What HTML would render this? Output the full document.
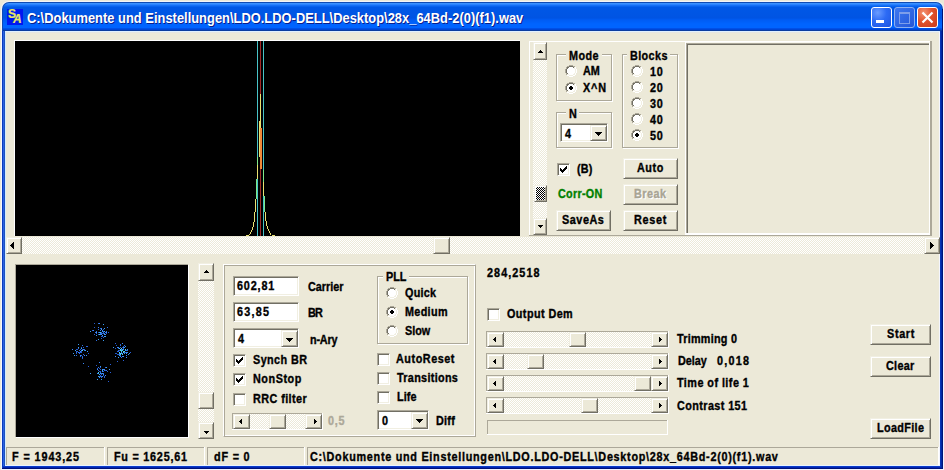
<!DOCTYPE html>
<html><head><meta charset="utf-8"><style>
html,body{margin:0;padding:0;width:944px;height:470px;overflow:hidden;background:#ECE9D8;}
body>div,body>span,body>svg{position:absolute;box-sizing:content-box;}
.t{position:absolute;font-family:"Liberation Sans",sans-serif;font-weight:bold;white-space:pre;-webkit-text-stroke:0.35px currentColor;}
.btn{border:1px solid;border-color:#F1EFE2 #716F64 #716F64 #F1EFE2;box-shadow:inset 1px 1px 0 #fff, inset -1px -1px 0 #ACA899;background:#ECE9D8;}
.sunk{border:1px solid;border-color:#ACA899 #fff #fff #ACA899;box-shadow:inset 1px 1px 0 #716F64, inset -1px -1px 0 #F1EFE2;}
.rad{width:12px;height:12px;border-radius:50%;background:#fff;box-sizing:border-box;border:1px solid;border-color:#ACA899 #fff #fff #ACA899;box-shadow:inset 1px 1px 0 #716F64;}
.cap{width:19px;height:19px;border:1px solid #fff;border-radius:3px;box-sizing:content-box;}
</style></head><body>
<div style="left:1px;top:1px;width:943px;height:30px;background:#F2F4FA;border-radius:8px 8px 0 0"></div>
<div style="left:2px;top:2px;width:941px;height:29px;background:#0F4CB4;border-radius:7px 7px 0 0"></div>
<div style="left:3px;top:3px;width:939px;height:28px;border-radius:6px 6px 0 0;background:linear-gradient(180deg,#3A92FF 0px,#3A92FF 1px,#2A82FF 1px,#2A82FF 2px,#1470F6 2px,#1470F6 3px,#0862EE 3px,#0862EE 4px,#0058E6 4px,#0054E3 15px,#005CF4 17px,#0064FF 21px,#0064FF 25px,#0050E8 25px,#0050E8 26px,#0046D6 26px,#0046D6 27px,#0A3CA0 27px,#0A3CA0 28px)"></div>
<div style="left:2px;top:31px;width:1px;height:438px;background:#0A3CC0"></div>
<div style="left:3px;top:31px;width:1px;height:435px;background:#2A62E0"></div>
<div style="left:4px;top:31px;width:1px;height:435px;background:#1E50C0"></div>
<div style="left:5px;top:31px;width:1px;height:434px;background:#D0ECFF"></div>
<div style="left:939px;top:31px;width:1px;height:434px;background:#F4F6FF"></div>
<div style="left:940px;top:31px;width:1px;height:438px;background:#0834B4"></div>
<div style="left:941px;top:31px;width:1px;height:438px;background:#0028A4"></div>
<div style="left:942px;top:9px;width:1px;height:460px;background:#001478"></div>
<div style="left:5px;top:465px;width:935px;height:1px;background:#E8F2FF"></div>
<div style="left:3px;top:466px;width:937px;height:1px;background:#0B3BCB"></div>
<div style="left:3px;top:467px;width:938px;height:1px;background:#0025B0"></div>
<div style="left:2px;top:468px;width:941px;height:1px;background:#00107A"></div>
<div style="left:1px;top:10px;width:1px;height:460px;background:#F4F6FF"></div>
<div style="left:943px;top:10px;width:1px;height:460px;background:#F0F2FF"></div>
<div style="left:1px;top:469px;width:943px;height:1px;background:#F0F2FF"></div>
<div style="left:6px;top:31px;width:933px;height:434px;background:#ECE9D8"></div>
<div style="left:5px;top:31px;width:935px;height:1px;background:#E0F0FF"></div>
<div style="left:6px;top:32px;width:933px;height:1px;background:#E6E6E0"></div>
<div style="left:7px;top:9px;width:16px;height:16px;background:#0018F0"></div>
<span class="t" style="left:8px;top:8px;font-size:12px;line-height:12px;color:#E8E860;-webkit-text-stroke:0.2px #E8E860">S</span>
<span class="t" style="left:13px;top:13px;font-size:12px;line-height:12px;color:#E8E860;font-style:italic;-webkit-text-stroke:0.2px #E8E860">A</span>
<span class="t" style="left:27.00px;top:11px;font-size:14px;line-height:14px;letter-spacing:0.016px;color:#fff;transform:scaleX(0.92);transform-origin:0 0;text-shadow:1px 1px 0 #0A1E8C;-webkit-text-stroke:0px #fff">C:\Dokumente und Einstellungen\LDO.LDO-DELL\Desktop\28x_64Bd-2(0)(f1).wav</span>
<div class="cap" style="left:871px;top:7px;background:radial-gradient(circle at 30% 25%,#6A9CFF 0,#2D6BF5 45%,#1F55E0 100%)"></div>
<div style="left:876px;top:20px;width:8px;height:3px;background:#fff"></div>
<div class="cap" style="left:894px;top:7px;border-color:#8EB0F0;background:linear-gradient(135deg,#3E78F0,#2456D8)"></div>
<div style="left:899px;top:12px;width:9px;height:9px;border:1px solid #7E9EEA;border-top-width:2px;"></div>
<div class="cap" style="left:917px;top:7px;background:radial-gradient(circle at 30% 25%,#F39373 0,#E2522C 45%,#C8391A 100%)"></div>
<svg style="left:921px;top:11px" width="13" height="13"><path d="M1.5 1.5 L11.5 11.5 M11.5 1.5 L1.5 11.5" stroke="#fff" stroke-width="2.2"/></svg>
<div style="left:14px;top:40px;width:506px;height:1px;background:#FFFFFF"></div>
<div style="left:14px;top:40px;width:1px;height:196px;background:#FFFFFF"></div>
<div style="left:15px;top:41px;width:505px;height:195px;background:#000"></div>
<svg style="left:15px;top:41px" width="505" height="195" shape-rendering="crispEdges"><rect x="242" y="0" width="1" height="195" fill="#48C4C8"/><rect x="248" y="0" width="1" height="195" fill="#48C4C8"/><rect x="245" y="0" width="1" height="53" fill="#A02828"/><rect x="245" y="53" width="1" height="34" fill="#E8E070"/><rect x="244" y="80" width="1" height="7" fill="#E8E070"/><rect x="244" y="87" width="1" height="29" fill="#E8E070"/><rect x="245" y="87" width="1" height="41" fill="#F08838"/><rect x="246" y="87" width="1" height="41" fill="#F08838"/><rect x="245" y="128" width="1" height="67" fill="#A02828"/><rect x="242" y="116" width="1" height="8" fill="#80E888"/><rect x="242" y="124" width="1" height="14" fill="#E8E070"/><rect x="241" y="138" width="1" height="20" fill="#80E888"/><rect x="240" y="158" width="1" height="13" fill="#E8E070"/><rect x="239" y="171" width="1" height="10" fill="#E8E070"/><rect x="238" y="181" width="1" height="5" fill="#E8E070"/><rect x="237" y="186" width="1" height="3" fill="#E8E070"/><rect x="236" y="189" width="1" height="2" fill="#E8E070"/><rect x="235" y="191" width="1" height="2" fill="#E8E070"/><rect x="234" y="193" width="1" height="1" fill="#E8E070"/><rect x="231" y="194" width="3" height="1" fill="#E8E070"/><rect x="248" y="129" width="1" height="12" fill="#80E888"/><rect x="248" y="141" width="1" height="14" fill="#E8E070"/><rect x="249" y="155" width="1" height="16" fill="#80E888"/><rect x="250" y="171" width="1" height="9" fill="#E8E070"/><rect x="251" y="180" width="1" height="5" fill="#E8E070"/><rect x="252" y="185" width="1" height="3" fill="#E8E070"/><rect x="253" y="188" width="1" height="2" fill="#E8E070"/><rect x="254" y="190" width="1" height="2" fill="#E8E070"/><rect x="255" y="192" width="1" height="2" fill="#E8E070"/><rect x="257" y="194" width="3" height="1" fill="#E8E070"/></svg>
<div style="left:529px;top:41px;width:157px;height:1px;background:#FFFFFF"></div>
<div style="left:529px;top:41px;width:1px;height:195px;background:#FFFFFF"></div>
<div style="left:529px;top:235px;width:157px;height:1px;background:#ACA899"></div>
<div style="left:533px;top:42px;width:14px;height:193px;background:repeating-conic-gradient(#fff 0 25%, #ECE9D8 0 50%) 0 0/2px 2px"></div>
<div class="btn" style="left:533px;top:42px;width:12px;height:16px;"></div>
<svg style="left:538px;top:50px" width="5" height="3" shape-rendering="crispEdges" fill="#000"><rect x="2" y="0" width="1" height="1"/><rect x="1" y="1" width="3" height="1"/><rect x="0" y="2" width="5" height="1"/></svg>
<div class="btn" style="left:533px;top:218px;width:12px;height:15px;"></div>
<svg style="left:538px;top:225px" width="5" height="3" shape-rendering="crispEdges" fill="#000"><rect x="0" y="0" width="5" height="1"/><rect x="1" y="1" width="3" height="1"/><rect x="2" y="2" width="1" height="1"/></svg>
<div class="btn" style="left:534px;top:185px;width:11px;height:15px;"></div>
<div style="left:536px;top:187px;width:9px;height:13px;background:repeating-conic-gradient(#000 0 25%, #fff 0 50%) 0 0/2px 2px"></div>
<div style="left:556px;top:54px;width:54px;height:45px;border:1px solid #ACA899;box-shadow:1px 1px 0 #FFFFFF, inset 1px 1px 0 #FFFFFF"></div>
<div style="left:566px;top:49px;width:36px;height:12px;background:#ECE9D8"></div>
<span class="t" style="left:569.00px;top:50px;font-size:12px;line-height:12px;letter-spacing:0.444px;color:#000;transform:scaleX(0.9);transform-origin:0 0;">Mode</span>
<svg style="left:565px;top:65px" width="12" height="12" shape-rendering="crispEdges"><rect x="4" y="0" width="1" height="1" fill="#ACA899"/><rect x="5" y="0" width="1" height="1" fill="#ACA899"/><rect x="6" y="0" width="1" height="1" fill="#ACA899"/><rect x="7" y="0" width="1" height="1" fill="#ACA899"/><rect x="2" y="1" width="1" height="1" fill="#ACA899"/><rect x="3" y="1" width="1" height="1" fill="#ACA899"/><rect x="4" y="1" width="1" height="1" fill="#716F64"/><rect x="5" y="1" width="1" height="1" fill="#716F64"/><rect x="6" y="1" width="1" height="1" fill="#716F64"/><rect x="7" y="1" width="1" height="1" fill="#716F64"/><rect x="8" y="1" width="1" height="1" fill="#ACA899"/><rect x="9" y="1" width="1" height="1" fill="#ACA899"/><rect x="1" y="2" width="1" height="1" fill="#ACA899"/><rect x="2" y="2" width="1" height="1" fill="#716F64"/><rect x="3" y="2" width="1" height="1" fill="#716F64"/><rect x="4" y="2" width="1" height="1" fill="#FFFFFF"/><rect x="5" y="2" width="1" height="1" fill="#FFFFFF"/><rect x="6" y="2" width="1" height="1" fill="#FFFFFF"/><rect x="7" y="2" width="1" height="1" fill="#FFFFFF"/><rect x="8" y="2" width="1" height="1" fill="#716F64"/><rect x="9" y="2" width="1" height="1" fill="#F1EFE2"/><rect x="10" y="2" width="1" height="1" fill="#FFFFFF"/><rect x="1" y="3" width="1" height="1" fill="#ACA899"/><rect x="2" y="3" width="1" height="1" fill="#716F64"/><rect x="3" y="3" width="1" height="1" fill="#FFFFFF"/><rect x="4" y="3" width="1" height="1" fill="#FFFFFF"/><rect x="5" y="3" width="1" height="1" fill="#FFFFFF"/><rect x="6" y="3" width="1" height="1" fill="#FFFFFF"/><rect x="7" y="3" width="1" height="1" fill="#FFFFFF"/><rect x="8" y="3" width="1" height="1" fill="#FFFFFF"/><rect x="9" y="3" width="1" height="1" fill="#F1EFE2"/><rect x="10" y="3" width="1" height="1" fill="#FFFFFF"/><rect x="0" y="4" width="1" height="1" fill="#ACA899"/><rect x="1" y="4" width="1" height="1" fill="#716F64"/><rect x="2" y="4" width="1" height="1" fill="#FFFFFF"/><rect x="3" y="4" width="1" height="1" fill="#FFFFFF"/><rect x="4" y="4" width="1" height="1" fill="#FFFFFF"/><rect x="5" y="4" width="1" height="1" fill="#FFFFFF"/><rect x="6" y="4" width="1" height="1" fill="#FFFFFF"/><rect x="7" y="4" width="1" height="1" fill="#FFFFFF"/><rect x="8" y="4" width="1" height="1" fill="#FFFFFF"/><rect x="9" y="4" width="1" height="1" fill="#FFFFFF"/><rect x="10" y="4" width="1" height="1" fill="#F1EFE2"/><rect x="11" y="4" width="1" height="1" fill="#FFFFFF"/><rect x="0" y="5" width="1" height="1" fill="#ACA899"/><rect x="1" y="5" width="1" height="1" fill="#716F64"/><rect x="2" y="5" width="1" height="1" fill="#FFFFFF"/><rect x="3" y="5" width="1" height="1" fill="#FFFFFF"/><rect x="4" y="5" width="1" height="1" fill="#FFFFFF"/><rect x="5" y="5" width="1" height="1" fill="#FFFFFF"/><rect x="6" y="5" width="1" height="1" fill="#FFFFFF"/><rect x="7" y="5" width="1" height="1" fill="#FFFFFF"/><rect x="8" y="5" width="1" height="1" fill="#FFFFFF"/><rect x="9" y="5" width="1" height="1" fill="#FFFFFF"/><rect x="10" y="5" width="1" height="1" fill="#F1EFE2"/><rect x="11" y="5" width="1" height="1" fill="#FFFFFF"/><rect x="0" y="6" width="1" height="1" fill="#ACA899"/><rect x="1" y="6" width="1" height="1" fill="#716F64"/><rect x="2" y="6" width="1" height="1" fill="#FFFFFF"/><rect x="3" y="6" width="1" height="1" fill="#FFFFFF"/><rect x="4" y="6" width="1" height="1" fill="#FFFFFF"/><rect x="5" y="6" width="1" height="1" fill="#FFFFFF"/><rect x="6" y="6" width="1" height="1" fill="#FFFFFF"/><rect x="7" y="6" width="1" height="1" fill="#FFFFFF"/><rect x="8" y="6" width="1" height="1" fill="#FFFFFF"/><rect x="9" y="6" width="1" height="1" fill="#FFFFFF"/><rect x="10" y="6" width="1" height="1" fill="#F1EFE2"/><rect x="11" y="6" width="1" height="1" fill="#FFFFFF"/><rect x="0" y="7" width="1" height="1" fill="#ACA899"/><rect x="1" y="7" width="1" height="1" fill="#716F64"/><rect x="2" y="7" width="1" height="1" fill="#FFFFFF"/><rect x="3" y="7" width="1" height="1" fill="#FFFFFF"/><rect x="4" y="7" width="1" height="1" fill="#FFFFFF"/><rect x="5" y="7" width="1" height="1" fill="#FFFFFF"/><rect x="6" y="7" width="1" height="1" fill="#FFFFFF"/><rect x="7" y="7" width="1" height="1" fill="#FFFFFF"/><rect x="8" y="7" width="1" height="1" fill="#FFFFFF"/><rect x="9" y="7" width="1" height="1" fill="#FFFFFF"/><rect x="10" y="7" width="1" height="1" fill="#F1EFE2"/><rect x="11" y="7" width="1" height="1" fill="#FFFFFF"/><rect x="1" y="8" width="1" height="1" fill="#ACA899"/><rect x="2" y="8" width="1" height="1" fill="#716F64"/><rect x="3" y="8" width="1" height="1" fill="#FFFFFF"/><rect x="4" y="8" width="1" height="1" fill="#FFFFFF"/><rect x="5" y="8" width="1" height="1" fill="#FFFFFF"/><rect x="6" y="8" width="1" height="1" fill="#FFFFFF"/><rect x="7" y="8" width="1" height="1" fill="#FFFFFF"/><rect x="8" y="8" width="1" height="1" fill="#FFFFFF"/><rect x="9" y="8" width="1" height="1" fill="#F1EFE2"/><rect x="10" y="8" width="1" height="1" fill="#FFFFFF"/><rect x="1" y="9" width="1" height="1" fill="#ACA899"/><rect x="2" y="9" width="1" height="1" fill="#F1EFE2"/><rect x="3" y="9" width="1" height="1" fill="#F1EFE2"/><rect x="4" y="9" width="1" height="1" fill="#FFFFFF"/><rect x="5" y="9" width="1" height="1" fill="#FFFFFF"/><rect x="6" y="9" width="1" height="1" fill="#FFFFFF"/><rect x="7" y="9" width="1" height="1" fill="#FFFFFF"/><rect x="8" y="9" width="1" height="1" fill="#F1EFE2"/><rect x="9" y="9" width="1" height="1" fill="#F1EFE2"/><rect x="10" y="9" width="1" height="1" fill="#FFFFFF"/><rect x="2" y="10" width="1" height="1" fill="#FFFFFF"/><rect x="3" y="10" width="1" height="1" fill="#FFFFFF"/><rect x="4" y="10" width="1" height="1" fill="#F1EFE2"/><rect x="5" y="10" width="1" height="1" fill="#F1EFE2"/><rect x="6" y="10" width="1" height="1" fill="#F1EFE2"/><rect x="7" y="10" width="1" height="1" fill="#F1EFE2"/><rect x="8" y="10" width="1" height="1" fill="#FFFFFF"/><rect x="9" y="10" width="1" height="1" fill="#FFFFFF"/><rect x="4" y="11" width="1" height="1" fill="#FFFFFF"/><rect x="5" y="11" width="1" height="1" fill="#FFFFFF"/><rect x="6" y="11" width="1" height="1" fill="#FFFFFF"/><rect x="7" y="11" width="1" height="1" fill="#FFFFFF"/></svg>
<span class="t" style="left:583.00px;top:65px;font-size:12px;line-height:12px;letter-spacing:-0.111px;color:#000;transform:scaleX(0.9);transform-origin:0 0;">AM</span>
<svg style="left:565px;top:82px" width="12" height="12" shape-rendering="crispEdges"><rect x="4" y="0" width="1" height="1" fill="#ACA899"/><rect x="5" y="0" width="1" height="1" fill="#ACA899"/><rect x="6" y="0" width="1" height="1" fill="#ACA899"/><rect x="7" y="0" width="1" height="1" fill="#ACA899"/><rect x="2" y="1" width="1" height="1" fill="#ACA899"/><rect x="3" y="1" width="1" height="1" fill="#ACA899"/><rect x="4" y="1" width="1" height="1" fill="#716F64"/><rect x="5" y="1" width="1" height="1" fill="#716F64"/><rect x="6" y="1" width="1" height="1" fill="#716F64"/><rect x="7" y="1" width="1" height="1" fill="#716F64"/><rect x="8" y="1" width="1" height="1" fill="#ACA899"/><rect x="9" y="1" width="1" height="1" fill="#ACA899"/><rect x="1" y="2" width="1" height="1" fill="#ACA899"/><rect x="2" y="2" width="1" height="1" fill="#716F64"/><rect x="3" y="2" width="1" height="1" fill="#716F64"/><rect x="4" y="2" width="1" height="1" fill="#FFFFFF"/><rect x="5" y="2" width="1" height="1" fill="#FFFFFF"/><rect x="6" y="2" width="1" height="1" fill="#FFFFFF"/><rect x="7" y="2" width="1" height="1" fill="#FFFFFF"/><rect x="8" y="2" width="1" height="1" fill="#716F64"/><rect x="9" y="2" width="1" height="1" fill="#F1EFE2"/><rect x="10" y="2" width="1" height="1" fill="#FFFFFF"/><rect x="1" y="3" width="1" height="1" fill="#ACA899"/><rect x="2" y="3" width="1" height="1" fill="#716F64"/><rect x="3" y="3" width="1" height="1" fill="#FFFFFF"/><rect x="4" y="3" width="1" height="1" fill="#FFFFFF"/><rect x="5" y="3" width="1" height="1" fill="#FFFFFF"/><rect x="6" y="3" width="1" height="1" fill="#FFFFFF"/><rect x="7" y="3" width="1" height="1" fill="#FFFFFF"/><rect x="8" y="3" width="1" height="1" fill="#FFFFFF"/><rect x="9" y="3" width="1" height="1" fill="#F1EFE2"/><rect x="10" y="3" width="1" height="1" fill="#FFFFFF"/><rect x="0" y="4" width="1" height="1" fill="#ACA899"/><rect x="1" y="4" width="1" height="1" fill="#716F64"/><rect x="2" y="4" width="1" height="1" fill="#FFFFFF"/><rect x="3" y="4" width="1" height="1" fill="#FFFFFF"/><rect x="4" y="4" width="1" height="1" fill="#FFFFFF"/><rect x="5" y="4" width="1" height="1" fill="#FFFFFF"/><rect x="6" y="4" width="1" height="1" fill="#FFFFFF"/><rect x="7" y="4" width="1" height="1" fill="#FFFFFF"/><rect x="8" y="4" width="1" height="1" fill="#FFFFFF"/><rect x="9" y="4" width="1" height="1" fill="#FFFFFF"/><rect x="10" y="4" width="1" height="1" fill="#F1EFE2"/><rect x="11" y="4" width="1" height="1" fill="#FFFFFF"/><rect x="0" y="5" width="1" height="1" fill="#ACA899"/><rect x="1" y="5" width="1" height="1" fill="#716F64"/><rect x="2" y="5" width="1" height="1" fill="#FFFFFF"/><rect x="3" y="5" width="1" height="1" fill="#FFFFFF"/><rect x="4" y="5" width="1" height="1" fill="#FFFFFF"/><rect x="5" y="5" width="1" height="1" fill="#FFFFFF"/><rect x="6" y="5" width="1" height="1" fill="#FFFFFF"/><rect x="7" y="5" width="1" height="1" fill="#FFFFFF"/><rect x="8" y="5" width="1" height="1" fill="#FFFFFF"/><rect x="9" y="5" width="1" height="1" fill="#FFFFFF"/><rect x="10" y="5" width="1" height="1" fill="#F1EFE2"/><rect x="11" y="5" width="1" height="1" fill="#FFFFFF"/><rect x="0" y="6" width="1" height="1" fill="#ACA899"/><rect x="1" y="6" width="1" height="1" fill="#716F64"/><rect x="2" y="6" width="1" height="1" fill="#FFFFFF"/><rect x="3" y="6" width="1" height="1" fill="#FFFFFF"/><rect x="4" y="6" width="1" height="1" fill="#FFFFFF"/><rect x="5" y="6" width="1" height="1" fill="#FFFFFF"/><rect x="6" y="6" width="1" height="1" fill="#FFFFFF"/><rect x="7" y="6" width="1" height="1" fill="#FFFFFF"/><rect x="8" y="6" width="1" height="1" fill="#FFFFFF"/><rect x="9" y="6" width="1" height="1" fill="#FFFFFF"/><rect x="10" y="6" width="1" height="1" fill="#F1EFE2"/><rect x="11" y="6" width="1" height="1" fill="#FFFFFF"/><rect x="0" y="7" width="1" height="1" fill="#ACA899"/><rect x="1" y="7" width="1" height="1" fill="#716F64"/><rect x="2" y="7" width="1" height="1" fill="#FFFFFF"/><rect x="3" y="7" width="1" height="1" fill="#FFFFFF"/><rect x="4" y="7" width="1" height="1" fill="#FFFFFF"/><rect x="5" y="7" width="1" height="1" fill="#FFFFFF"/><rect x="6" y="7" width="1" height="1" fill="#FFFFFF"/><rect x="7" y="7" width="1" height="1" fill="#FFFFFF"/><rect x="8" y="7" width="1" height="1" fill="#FFFFFF"/><rect x="9" y="7" width="1" height="1" fill="#FFFFFF"/><rect x="10" y="7" width="1" height="1" fill="#F1EFE2"/><rect x="11" y="7" width="1" height="1" fill="#FFFFFF"/><rect x="1" y="8" width="1" height="1" fill="#ACA899"/><rect x="2" y="8" width="1" height="1" fill="#716F64"/><rect x="3" y="8" width="1" height="1" fill="#FFFFFF"/><rect x="4" y="8" width="1" height="1" fill="#FFFFFF"/><rect x="5" y="8" width="1" height="1" fill="#FFFFFF"/><rect x="6" y="8" width="1" height="1" fill="#FFFFFF"/><rect x="7" y="8" width="1" height="1" fill="#FFFFFF"/><rect x="8" y="8" width="1" height="1" fill="#FFFFFF"/><rect x="9" y="8" width="1" height="1" fill="#F1EFE2"/><rect x="10" y="8" width="1" height="1" fill="#FFFFFF"/><rect x="1" y="9" width="1" height="1" fill="#ACA899"/><rect x="2" y="9" width="1" height="1" fill="#F1EFE2"/><rect x="3" y="9" width="1" height="1" fill="#F1EFE2"/><rect x="4" y="9" width="1" height="1" fill="#FFFFFF"/><rect x="5" y="9" width="1" height="1" fill="#FFFFFF"/><rect x="6" y="9" width="1" height="1" fill="#FFFFFF"/><rect x="7" y="9" width="1" height="1" fill="#FFFFFF"/><rect x="8" y="9" width="1" height="1" fill="#F1EFE2"/><rect x="9" y="9" width="1" height="1" fill="#F1EFE2"/><rect x="10" y="9" width="1" height="1" fill="#FFFFFF"/><rect x="2" y="10" width="1" height="1" fill="#FFFFFF"/><rect x="3" y="10" width="1" height="1" fill="#FFFFFF"/><rect x="4" y="10" width="1" height="1" fill="#F1EFE2"/><rect x="5" y="10" width="1" height="1" fill="#F1EFE2"/><rect x="6" y="10" width="1" height="1" fill="#F1EFE2"/><rect x="7" y="10" width="1" height="1" fill="#F1EFE2"/><rect x="8" y="10" width="1" height="1" fill="#FFFFFF"/><rect x="9" y="10" width="1" height="1" fill="#FFFFFF"/><rect x="4" y="11" width="1" height="1" fill="#FFFFFF"/><rect x="5" y="11" width="1" height="1" fill="#FFFFFF"/><rect x="6" y="11" width="1" height="1" fill="#FFFFFF"/><rect x="7" y="11" width="1" height="1" fill="#FFFFFF"/><g transform="translate(4,4)"><rect x="1" y="0" width="1" height="1" fill="#000"/><rect x="2" y="0" width="1" height="1" fill="#000"/><rect x="0" y="1" width="1" height="1" fill="#000"/><rect x="1" y="1" width="1" height="1" fill="#000"/><rect x="2" y="1" width="1" height="1" fill="#000"/><rect x="3" y="1" width="1" height="1" fill="#000"/><rect x="0" y="2" width="1" height="1" fill="#000"/><rect x="1" y="2" width="1" height="1" fill="#000"/><rect x="2" y="2" width="1" height="1" fill="#000"/><rect x="3" y="2" width="1" height="1" fill="#000"/><rect x="1" y="3" width="1" height="1" fill="#000"/><rect x="2" y="3" width="1" height="1" fill="#000"/></g></svg>
<span class="t" style="left:583.00px;top:82px;font-size:12px;line-height:12px;letter-spacing:1.000px;color:#000;transform:scaleX(0.9);transform-origin:0 0;">X^N</span>
<div style="left:622px;top:54px;width:54px;height:92px;border:1px solid #ACA899;box-shadow:1px 1px 0 #FFFFFF, inset 1px 1px 0 #FFFFFF"></div>
<div style="left:627px;top:49px;width:43px;height:12px;background:#ECE9D8"></div>
<span class="t" style="left:630.00px;top:50px;font-size:12px;line-height:12px;letter-spacing:0.444px;color:#000;transform:scaleX(0.9);transform-origin:0 0;">Blocks</span>
<svg style="left:631px;top:65px" width="12" height="12" shape-rendering="crispEdges"><rect x="4" y="0" width="1" height="1" fill="#ACA899"/><rect x="5" y="0" width="1" height="1" fill="#ACA899"/><rect x="6" y="0" width="1" height="1" fill="#ACA899"/><rect x="7" y="0" width="1" height="1" fill="#ACA899"/><rect x="2" y="1" width="1" height="1" fill="#ACA899"/><rect x="3" y="1" width="1" height="1" fill="#ACA899"/><rect x="4" y="1" width="1" height="1" fill="#716F64"/><rect x="5" y="1" width="1" height="1" fill="#716F64"/><rect x="6" y="1" width="1" height="1" fill="#716F64"/><rect x="7" y="1" width="1" height="1" fill="#716F64"/><rect x="8" y="1" width="1" height="1" fill="#ACA899"/><rect x="9" y="1" width="1" height="1" fill="#ACA899"/><rect x="1" y="2" width="1" height="1" fill="#ACA899"/><rect x="2" y="2" width="1" height="1" fill="#716F64"/><rect x="3" y="2" width="1" height="1" fill="#716F64"/><rect x="4" y="2" width="1" height="1" fill="#FFFFFF"/><rect x="5" y="2" width="1" height="1" fill="#FFFFFF"/><rect x="6" y="2" width="1" height="1" fill="#FFFFFF"/><rect x="7" y="2" width="1" height="1" fill="#FFFFFF"/><rect x="8" y="2" width="1" height="1" fill="#716F64"/><rect x="9" y="2" width="1" height="1" fill="#F1EFE2"/><rect x="10" y="2" width="1" height="1" fill="#FFFFFF"/><rect x="1" y="3" width="1" height="1" fill="#ACA899"/><rect x="2" y="3" width="1" height="1" fill="#716F64"/><rect x="3" y="3" width="1" height="1" fill="#FFFFFF"/><rect x="4" y="3" width="1" height="1" fill="#FFFFFF"/><rect x="5" y="3" width="1" height="1" fill="#FFFFFF"/><rect x="6" y="3" width="1" height="1" fill="#FFFFFF"/><rect x="7" y="3" width="1" height="1" fill="#FFFFFF"/><rect x="8" y="3" width="1" height="1" fill="#FFFFFF"/><rect x="9" y="3" width="1" height="1" fill="#F1EFE2"/><rect x="10" y="3" width="1" height="1" fill="#FFFFFF"/><rect x="0" y="4" width="1" height="1" fill="#ACA899"/><rect x="1" y="4" width="1" height="1" fill="#716F64"/><rect x="2" y="4" width="1" height="1" fill="#FFFFFF"/><rect x="3" y="4" width="1" height="1" fill="#FFFFFF"/><rect x="4" y="4" width="1" height="1" fill="#FFFFFF"/><rect x="5" y="4" width="1" height="1" fill="#FFFFFF"/><rect x="6" y="4" width="1" height="1" fill="#FFFFFF"/><rect x="7" y="4" width="1" height="1" fill="#FFFFFF"/><rect x="8" y="4" width="1" height="1" fill="#FFFFFF"/><rect x="9" y="4" width="1" height="1" fill="#FFFFFF"/><rect x="10" y="4" width="1" height="1" fill="#F1EFE2"/><rect x="11" y="4" width="1" height="1" fill="#FFFFFF"/><rect x="0" y="5" width="1" height="1" fill="#ACA899"/><rect x="1" y="5" width="1" height="1" fill="#716F64"/><rect x="2" y="5" width="1" height="1" fill="#FFFFFF"/><rect x="3" y="5" width="1" height="1" fill="#FFFFFF"/><rect x="4" y="5" width="1" height="1" fill="#FFFFFF"/><rect x="5" y="5" width="1" height="1" fill="#FFFFFF"/><rect x="6" y="5" width="1" height="1" fill="#FFFFFF"/><rect x="7" y="5" width="1" height="1" fill="#FFFFFF"/><rect x="8" y="5" width="1" height="1" fill="#FFFFFF"/><rect x="9" y="5" width="1" height="1" fill="#FFFFFF"/><rect x="10" y="5" width="1" height="1" fill="#F1EFE2"/><rect x="11" y="5" width="1" height="1" fill="#FFFFFF"/><rect x="0" y="6" width="1" height="1" fill="#ACA899"/><rect x="1" y="6" width="1" height="1" fill="#716F64"/><rect x="2" y="6" width="1" height="1" fill="#FFFFFF"/><rect x="3" y="6" width="1" height="1" fill="#FFFFFF"/><rect x="4" y="6" width="1" height="1" fill="#FFFFFF"/><rect x="5" y="6" width="1" height="1" fill="#FFFFFF"/><rect x="6" y="6" width="1" height="1" fill="#FFFFFF"/><rect x="7" y="6" width="1" height="1" fill="#FFFFFF"/><rect x="8" y="6" width="1" height="1" fill="#FFFFFF"/><rect x="9" y="6" width="1" height="1" fill="#FFFFFF"/><rect x="10" y="6" width="1" height="1" fill="#F1EFE2"/><rect x="11" y="6" width="1" height="1" fill="#FFFFFF"/><rect x="0" y="7" width="1" height="1" fill="#ACA899"/><rect x="1" y="7" width="1" height="1" fill="#716F64"/><rect x="2" y="7" width="1" height="1" fill="#FFFFFF"/><rect x="3" y="7" width="1" height="1" fill="#FFFFFF"/><rect x="4" y="7" width="1" height="1" fill="#FFFFFF"/><rect x="5" y="7" width="1" height="1" fill="#FFFFFF"/><rect x="6" y="7" width="1" height="1" fill="#FFFFFF"/><rect x="7" y="7" width="1" height="1" fill="#FFFFFF"/><rect x="8" y="7" width="1" height="1" fill="#FFFFFF"/><rect x="9" y="7" width="1" height="1" fill="#FFFFFF"/><rect x="10" y="7" width="1" height="1" fill="#F1EFE2"/><rect x="11" y="7" width="1" height="1" fill="#FFFFFF"/><rect x="1" y="8" width="1" height="1" fill="#ACA899"/><rect x="2" y="8" width="1" height="1" fill="#716F64"/><rect x="3" y="8" width="1" height="1" fill="#FFFFFF"/><rect x="4" y="8" width="1" height="1" fill="#FFFFFF"/><rect x="5" y="8" width="1" height="1" fill="#FFFFFF"/><rect x="6" y="8" width="1" height="1" fill="#FFFFFF"/><rect x="7" y="8" width="1" height="1" fill="#FFFFFF"/><rect x="8" y="8" width="1" height="1" fill="#FFFFFF"/><rect x="9" y="8" width="1" height="1" fill="#F1EFE2"/><rect x="10" y="8" width="1" height="1" fill="#FFFFFF"/><rect x="1" y="9" width="1" height="1" fill="#ACA899"/><rect x="2" y="9" width="1" height="1" fill="#F1EFE2"/><rect x="3" y="9" width="1" height="1" fill="#F1EFE2"/><rect x="4" y="9" width="1" height="1" fill="#FFFFFF"/><rect x="5" y="9" width="1" height="1" fill="#FFFFFF"/><rect x="6" y="9" width="1" height="1" fill="#FFFFFF"/><rect x="7" y="9" width="1" height="1" fill="#FFFFFF"/><rect x="8" y="9" width="1" height="1" fill="#F1EFE2"/><rect x="9" y="9" width="1" height="1" fill="#F1EFE2"/><rect x="10" y="9" width="1" height="1" fill="#FFFFFF"/><rect x="2" y="10" width="1" height="1" fill="#FFFFFF"/><rect x="3" y="10" width="1" height="1" fill="#FFFFFF"/><rect x="4" y="10" width="1" height="1" fill="#F1EFE2"/><rect x="5" y="10" width="1" height="1" fill="#F1EFE2"/><rect x="6" y="10" width="1" height="1" fill="#F1EFE2"/><rect x="7" y="10" width="1" height="1" fill="#F1EFE2"/><rect x="8" y="10" width="1" height="1" fill="#FFFFFF"/><rect x="9" y="10" width="1" height="1" fill="#FFFFFF"/><rect x="4" y="11" width="1" height="1" fill="#FFFFFF"/><rect x="5" y="11" width="1" height="1" fill="#FFFFFF"/><rect x="6" y="11" width="1" height="1" fill="#FFFFFF"/><rect x="7" y="11" width="1" height="1" fill="#FFFFFF"/></svg>
<span class="t" style="left:650.00px;top:66px;font-size:12px;line-height:12px;letter-spacing:0.889px;color:#000;transform:scaleX(0.9);transform-origin:0 0;">10</span>
<svg style="left:631px;top:81px" width="12" height="12" shape-rendering="crispEdges"><rect x="4" y="0" width="1" height="1" fill="#ACA899"/><rect x="5" y="0" width="1" height="1" fill="#ACA899"/><rect x="6" y="0" width="1" height="1" fill="#ACA899"/><rect x="7" y="0" width="1" height="1" fill="#ACA899"/><rect x="2" y="1" width="1" height="1" fill="#ACA899"/><rect x="3" y="1" width="1" height="1" fill="#ACA899"/><rect x="4" y="1" width="1" height="1" fill="#716F64"/><rect x="5" y="1" width="1" height="1" fill="#716F64"/><rect x="6" y="1" width="1" height="1" fill="#716F64"/><rect x="7" y="1" width="1" height="1" fill="#716F64"/><rect x="8" y="1" width="1" height="1" fill="#ACA899"/><rect x="9" y="1" width="1" height="1" fill="#ACA899"/><rect x="1" y="2" width="1" height="1" fill="#ACA899"/><rect x="2" y="2" width="1" height="1" fill="#716F64"/><rect x="3" y="2" width="1" height="1" fill="#716F64"/><rect x="4" y="2" width="1" height="1" fill="#FFFFFF"/><rect x="5" y="2" width="1" height="1" fill="#FFFFFF"/><rect x="6" y="2" width="1" height="1" fill="#FFFFFF"/><rect x="7" y="2" width="1" height="1" fill="#FFFFFF"/><rect x="8" y="2" width="1" height="1" fill="#716F64"/><rect x="9" y="2" width="1" height="1" fill="#F1EFE2"/><rect x="10" y="2" width="1" height="1" fill="#FFFFFF"/><rect x="1" y="3" width="1" height="1" fill="#ACA899"/><rect x="2" y="3" width="1" height="1" fill="#716F64"/><rect x="3" y="3" width="1" height="1" fill="#FFFFFF"/><rect x="4" y="3" width="1" height="1" fill="#FFFFFF"/><rect x="5" y="3" width="1" height="1" fill="#FFFFFF"/><rect x="6" y="3" width="1" height="1" fill="#FFFFFF"/><rect x="7" y="3" width="1" height="1" fill="#FFFFFF"/><rect x="8" y="3" width="1" height="1" fill="#FFFFFF"/><rect x="9" y="3" width="1" height="1" fill="#F1EFE2"/><rect x="10" y="3" width="1" height="1" fill="#FFFFFF"/><rect x="0" y="4" width="1" height="1" fill="#ACA899"/><rect x="1" y="4" width="1" height="1" fill="#716F64"/><rect x="2" y="4" width="1" height="1" fill="#FFFFFF"/><rect x="3" y="4" width="1" height="1" fill="#FFFFFF"/><rect x="4" y="4" width="1" height="1" fill="#FFFFFF"/><rect x="5" y="4" width="1" height="1" fill="#FFFFFF"/><rect x="6" y="4" width="1" height="1" fill="#FFFFFF"/><rect x="7" y="4" width="1" height="1" fill="#FFFFFF"/><rect x="8" y="4" width="1" height="1" fill="#FFFFFF"/><rect x="9" y="4" width="1" height="1" fill="#FFFFFF"/><rect x="10" y="4" width="1" height="1" fill="#F1EFE2"/><rect x="11" y="4" width="1" height="1" fill="#FFFFFF"/><rect x="0" y="5" width="1" height="1" fill="#ACA899"/><rect x="1" y="5" width="1" height="1" fill="#716F64"/><rect x="2" y="5" width="1" height="1" fill="#FFFFFF"/><rect x="3" y="5" width="1" height="1" fill="#FFFFFF"/><rect x="4" y="5" width="1" height="1" fill="#FFFFFF"/><rect x="5" y="5" width="1" height="1" fill="#FFFFFF"/><rect x="6" y="5" width="1" height="1" fill="#FFFFFF"/><rect x="7" y="5" width="1" height="1" fill="#FFFFFF"/><rect x="8" y="5" width="1" height="1" fill="#FFFFFF"/><rect x="9" y="5" width="1" height="1" fill="#FFFFFF"/><rect x="10" y="5" width="1" height="1" fill="#F1EFE2"/><rect x="11" y="5" width="1" height="1" fill="#FFFFFF"/><rect x="0" y="6" width="1" height="1" fill="#ACA899"/><rect x="1" y="6" width="1" height="1" fill="#716F64"/><rect x="2" y="6" width="1" height="1" fill="#FFFFFF"/><rect x="3" y="6" width="1" height="1" fill="#FFFFFF"/><rect x="4" y="6" width="1" height="1" fill="#FFFFFF"/><rect x="5" y="6" width="1" height="1" fill="#FFFFFF"/><rect x="6" y="6" width="1" height="1" fill="#FFFFFF"/><rect x="7" y="6" width="1" height="1" fill="#FFFFFF"/><rect x="8" y="6" width="1" height="1" fill="#FFFFFF"/><rect x="9" y="6" width="1" height="1" fill="#FFFFFF"/><rect x="10" y="6" width="1" height="1" fill="#F1EFE2"/><rect x="11" y="6" width="1" height="1" fill="#FFFFFF"/><rect x="0" y="7" width="1" height="1" fill="#ACA899"/><rect x="1" y="7" width="1" height="1" fill="#716F64"/><rect x="2" y="7" width="1" height="1" fill="#FFFFFF"/><rect x="3" y="7" width="1" height="1" fill="#FFFFFF"/><rect x="4" y="7" width="1" height="1" fill="#FFFFFF"/><rect x="5" y="7" width="1" height="1" fill="#FFFFFF"/><rect x="6" y="7" width="1" height="1" fill="#FFFFFF"/><rect x="7" y="7" width="1" height="1" fill="#FFFFFF"/><rect x="8" y="7" width="1" height="1" fill="#FFFFFF"/><rect x="9" y="7" width="1" height="1" fill="#FFFFFF"/><rect x="10" y="7" width="1" height="1" fill="#F1EFE2"/><rect x="11" y="7" width="1" height="1" fill="#FFFFFF"/><rect x="1" y="8" width="1" height="1" fill="#ACA899"/><rect x="2" y="8" width="1" height="1" fill="#716F64"/><rect x="3" y="8" width="1" height="1" fill="#FFFFFF"/><rect x="4" y="8" width="1" height="1" fill="#FFFFFF"/><rect x="5" y="8" width="1" height="1" fill="#FFFFFF"/><rect x="6" y="8" width="1" height="1" fill="#FFFFFF"/><rect x="7" y="8" width="1" height="1" fill="#FFFFFF"/><rect x="8" y="8" width="1" height="1" fill="#FFFFFF"/><rect x="9" y="8" width="1" height="1" fill="#F1EFE2"/><rect x="10" y="8" width="1" height="1" fill="#FFFFFF"/><rect x="1" y="9" width="1" height="1" fill="#ACA899"/><rect x="2" y="9" width="1" height="1" fill="#F1EFE2"/><rect x="3" y="9" width="1" height="1" fill="#F1EFE2"/><rect x="4" y="9" width="1" height="1" fill="#FFFFFF"/><rect x="5" y="9" width="1" height="1" fill="#FFFFFF"/><rect x="6" y="9" width="1" height="1" fill="#FFFFFF"/><rect x="7" y="9" width="1" height="1" fill="#FFFFFF"/><rect x="8" y="9" width="1" height="1" fill="#F1EFE2"/><rect x="9" y="9" width="1" height="1" fill="#F1EFE2"/><rect x="10" y="9" width="1" height="1" fill="#FFFFFF"/><rect x="2" y="10" width="1" height="1" fill="#FFFFFF"/><rect x="3" y="10" width="1" height="1" fill="#FFFFFF"/><rect x="4" y="10" width="1" height="1" fill="#F1EFE2"/><rect x="5" y="10" width="1" height="1" fill="#F1EFE2"/><rect x="6" y="10" width="1" height="1" fill="#F1EFE2"/><rect x="7" y="10" width="1" height="1" fill="#F1EFE2"/><rect x="8" y="10" width="1" height="1" fill="#FFFFFF"/><rect x="9" y="10" width="1" height="1" fill="#FFFFFF"/><rect x="4" y="11" width="1" height="1" fill="#FFFFFF"/><rect x="5" y="11" width="1" height="1" fill="#FFFFFF"/><rect x="6" y="11" width="1" height="1" fill="#FFFFFF"/><rect x="7" y="11" width="1" height="1" fill="#FFFFFF"/></svg>
<span class="t" style="left:650.00px;top:82px;font-size:12px;line-height:12px;letter-spacing:0.889px;color:#000;transform:scaleX(0.9);transform-origin:0 0;">20</span>
<svg style="left:631px;top:97px" width="12" height="12" shape-rendering="crispEdges"><rect x="4" y="0" width="1" height="1" fill="#ACA899"/><rect x="5" y="0" width="1" height="1" fill="#ACA899"/><rect x="6" y="0" width="1" height="1" fill="#ACA899"/><rect x="7" y="0" width="1" height="1" fill="#ACA899"/><rect x="2" y="1" width="1" height="1" fill="#ACA899"/><rect x="3" y="1" width="1" height="1" fill="#ACA899"/><rect x="4" y="1" width="1" height="1" fill="#716F64"/><rect x="5" y="1" width="1" height="1" fill="#716F64"/><rect x="6" y="1" width="1" height="1" fill="#716F64"/><rect x="7" y="1" width="1" height="1" fill="#716F64"/><rect x="8" y="1" width="1" height="1" fill="#ACA899"/><rect x="9" y="1" width="1" height="1" fill="#ACA899"/><rect x="1" y="2" width="1" height="1" fill="#ACA899"/><rect x="2" y="2" width="1" height="1" fill="#716F64"/><rect x="3" y="2" width="1" height="1" fill="#716F64"/><rect x="4" y="2" width="1" height="1" fill="#FFFFFF"/><rect x="5" y="2" width="1" height="1" fill="#FFFFFF"/><rect x="6" y="2" width="1" height="1" fill="#FFFFFF"/><rect x="7" y="2" width="1" height="1" fill="#FFFFFF"/><rect x="8" y="2" width="1" height="1" fill="#716F64"/><rect x="9" y="2" width="1" height="1" fill="#F1EFE2"/><rect x="10" y="2" width="1" height="1" fill="#FFFFFF"/><rect x="1" y="3" width="1" height="1" fill="#ACA899"/><rect x="2" y="3" width="1" height="1" fill="#716F64"/><rect x="3" y="3" width="1" height="1" fill="#FFFFFF"/><rect x="4" y="3" width="1" height="1" fill="#FFFFFF"/><rect x="5" y="3" width="1" height="1" fill="#FFFFFF"/><rect x="6" y="3" width="1" height="1" fill="#FFFFFF"/><rect x="7" y="3" width="1" height="1" fill="#FFFFFF"/><rect x="8" y="3" width="1" height="1" fill="#FFFFFF"/><rect x="9" y="3" width="1" height="1" fill="#F1EFE2"/><rect x="10" y="3" width="1" height="1" fill="#FFFFFF"/><rect x="0" y="4" width="1" height="1" fill="#ACA899"/><rect x="1" y="4" width="1" height="1" fill="#716F64"/><rect x="2" y="4" width="1" height="1" fill="#FFFFFF"/><rect x="3" y="4" width="1" height="1" fill="#FFFFFF"/><rect x="4" y="4" width="1" height="1" fill="#FFFFFF"/><rect x="5" y="4" width="1" height="1" fill="#FFFFFF"/><rect x="6" y="4" width="1" height="1" fill="#FFFFFF"/><rect x="7" y="4" width="1" height="1" fill="#FFFFFF"/><rect x="8" y="4" width="1" height="1" fill="#FFFFFF"/><rect x="9" y="4" width="1" height="1" fill="#FFFFFF"/><rect x="10" y="4" width="1" height="1" fill="#F1EFE2"/><rect x="11" y="4" width="1" height="1" fill="#FFFFFF"/><rect x="0" y="5" width="1" height="1" fill="#ACA899"/><rect x="1" y="5" width="1" height="1" fill="#716F64"/><rect x="2" y="5" width="1" height="1" fill="#FFFFFF"/><rect x="3" y="5" width="1" height="1" fill="#FFFFFF"/><rect x="4" y="5" width="1" height="1" fill="#FFFFFF"/><rect x="5" y="5" width="1" height="1" fill="#FFFFFF"/><rect x="6" y="5" width="1" height="1" fill="#FFFFFF"/><rect x="7" y="5" width="1" height="1" fill="#FFFFFF"/><rect x="8" y="5" width="1" height="1" fill="#FFFFFF"/><rect x="9" y="5" width="1" height="1" fill="#FFFFFF"/><rect x="10" y="5" width="1" height="1" fill="#F1EFE2"/><rect x="11" y="5" width="1" height="1" fill="#FFFFFF"/><rect x="0" y="6" width="1" height="1" fill="#ACA899"/><rect x="1" y="6" width="1" height="1" fill="#716F64"/><rect x="2" y="6" width="1" height="1" fill="#FFFFFF"/><rect x="3" y="6" width="1" height="1" fill="#FFFFFF"/><rect x="4" y="6" width="1" height="1" fill="#FFFFFF"/><rect x="5" y="6" width="1" height="1" fill="#FFFFFF"/><rect x="6" y="6" width="1" height="1" fill="#FFFFFF"/><rect x="7" y="6" width="1" height="1" fill="#FFFFFF"/><rect x="8" y="6" width="1" height="1" fill="#FFFFFF"/><rect x="9" y="6" width="1" height="1" fill="#FFFFFF"/><rect x="10" y="6" width="1" height="1" fill="#F1EFE2"/><rect x="11" y="6" width="1" height="1" fill="#FFFFFF"/><rect x="0" y="7" width="1" height="1" fill="#ACA899"/><rect x="1" y="7" width="1" height="1" fill="#716F64"/><rect x="2" y="7" width="1" height="1" fill="#FFFFFF"/><rect x="3" y="7" width="1" height="1" fill="#FFFFFF"/><rect x="4" y="7" width="1" height="1" fill="#FFFFFF"/><rect x="5" y="7" width="1" height="1" fill="#FFFFFF"/><rect x="6" y="7" width="1" height="1" fill="#FFFFFF"/><rect x="7" y="7" width="1" height="1" fill="#FFFFFF"/><rect x="8" y="7" width="1" height="1" fill="#FFFFFF"/><rect x="9" y="7" width="1" height="1" fill="#FFFFFF"/><rect x="10" y="7" width="1" height="1" fill="#F1EFE2"/><rect x="11" y="7" width="1" height="1" fill="#FFFFFF"/><rect x="1" y="8" width="1" height="1" fill="#ACA899"/><rect x="2" y="8" width="1" height="1" fill="#716F64"/><rect x="3" y="8" width="1" height="1" fill="#FFFFFF"/><rect x="4" y="8" width="1" height="1" fill="#FFFFFF"/><rect x="5" y="8" width="1" height="1" fill="#FFFFFF"/><rect x="6" y="8" width="1" height="1" fill="#FFFFFF"/><rect x="7" y="8" width="1" height="1" fill="#FFFFFF"/><rect x="8" y="8" width="1" height="1" fill="#FFFFFF"/><rect x="9" y="8" width="1" height="1" fill="#F1EFE2"/><rect x="10" y="8" width="1" height="1" fill="#FFFFFF"/><rect x="1" y="9" width="1" height="1" fill="#ACA899"/><rect x="2" y="9" width="1" height="1" fill="#F1EFE2"/><rect x="3" y="9" width="1" height="1" fill="#F1EFE2"/><rect x="4" y="9" width="1" height="1" fill="#FFFFFF"/><rect x="5" y="9" width="1" height="1" fill="#FFFFFF"/><rect x="6" y="9" width="1" height="1" fill="#FFFFFF"/><rect x="7" y="9" width="1" height="1" fill="#FFFFFF"/><rect x="8" y="9" width="1" height="1" fill="#F1EFE2"/><rect x="9" y="9" width="1" height="1" fill="#F1EFE2"/><rect x="10" y="9" width="1" height="1" fill="#FFFFFF"/><rect x="2" y="10" width="1" height="1" fill="#FFFFFF"/><rect x="3" y="10" width="1" height="1" fill="#FFFFFF"/><rect x="4" y="10" width="1" height="1" fill="#F1EFE2"/><rect x="5" y="10" width="1" height="1" fill="#F1EFE2"/><rect x="6" y="10" width="1" height="1" fill="#F1EFE2"/><rect x="7" y="10" width="1" height="1" fill="#F1EFE2"/><rect x="8" y="10" width="1" height="1" fill="#FFFFFF"/><rect x="9" y="10" width="1" height="1" fill="#FFFFFF"/><rect x="4" y="11" width="1" height="1" fill="#FFFFFF"/><rect x="5" y="11" width="1" height="1" fill="#FFFFFF"/><rect x="6" y="11" width="1" height="1" fill="#FFFFFF"/><rect x="7" y="11" width="1" height="1" fill="#FFFFFF"/></svg>
<span class="t" style="left:650.00px;top:98px;font-size:12px;line-height:12px;letter-spacing:0.889px;color:#000;transform:scaleX(0.9);transform-origin:0 0;">30</span>
<svg style="left:631px;top:113px" width="12" height="12" shape-rendering="crispEdges"><rect x="4" y="0" width="1" height="1" fill="#ACA899"/><rect x="5" y="0" width="1" height="1" fill="#ACA899"/><rect x="6" y="0" width="1" height="1" fill="#ACA899"/><rect x="7" y="0" width="1" height="1" fill="#ACA899"/><rect x="2" y="1" width="1" height="1" fill="#ACA899"/><rect x="3" y="1" width="1" height="1" fill="#ACA899"/><rect x="4" y="1" width="1" height="1" fill="#716F64"/><rect x="5" y="1" width="1" height="1" fill="#716F64"/><rect x="6" y="1" width="1" height="1" fill="#716F64"/><rect x="7" y="1" width="1" height="1" fill="#716F64"/><rect x="8" y="1" width="1" height="1" fill="#ACA899"/><rect x="9" y="1" width="1" height="1" fill="#ACA899"/><rect x="1" y="2" width="1" height="1" fill="#ACA899"/><rect x="2" y="2" width="1" height="1" fill="#716F64"/><rect x="3" y="2" width="1" height="1" fill="#716F64"/><rect x="4" y="2" width="1" height="1" fill="#FFFFFF"/><rect x="5" y="2" width="1" height="1" fill="#FFFFFF"/><rect x="6" y="2" width="1" height="1" fill="#FFFFFF"/><rect x="7" y="2" width="1" height="1" fill="#FFFFFF"/><rect x="8" y="2" width="1" height="1" fill="#716F64"/><rect x="9" y="2" width="1" height="1" fill="#F1EFE2"/><rect x="10" y="2" width="1" height="1" fill="#FFFFFF"/><rect x="1" y="3" width="1" height="1" fill="#ACA899"/><rect x="2" y="3" width="1" height="1" fill="#716F64"/><rect x="3" y="3" width="1" height="1" fill="#FFFFFF"/><rect x="4" y="3" width="1" height="1" fill="#FFFFFF"/><rect x="5" y="3" width="1" height="1" fill="#FFFFFF"/><rect x="6" y="3" width="1" height="1" fill="#FFFFFF"/><rect x="7" y="3" width="1" height="1" fill="#FFFFFF"/><rect x="8" y="3" width="1" height="1" fill="#FFFFFF"/><rect x="9" y="3" width="1" height="1" fill="#F1EFE2"/><rect x="10" y="3" width="1" height="1" fill="#FFFFFF"/><rect x="0" y="4" width="1" height="1" fill="#ACA899"/><rect x="1" y="4" width="1" height="1" fill="#716F64"/><rect x="2" y="4" width="1" height="1" fill="#FFFFFF"/><rect x="3" y="4" width="1" height="1" fill="#FFFFFF"/><rect x="4" y="4" width="1" height="1" fill="#FFFFFF"/><rect x="5" y="4" width="1" height="1" fill="#FFFFFF"/><rect x="6" y="4" width="1" height="1" fill="#FFFFFF"/><rect x="7" y="4" width="1" height="1" fill="#FFFFFF"/><rect x="8" y="4" width="1" height="1" fill="#FFFFFF"/><rect x="9" y="4" width="1" height="1" fill="#FFFFFF"/><rect x="10" y="4" width="1" height="1" fill="#F1EFE2"/><rect x="11" y="4" width="1" height="1" fill="#FFFFFF"/><rect x="0" y="5" width="1" height="1" fill="#ACA899"/><rect x="1" y="5" width="1" height="1" fill="#716F64"/><rect x="2" y="5" width="1" height="1" fill="#FFFFFF"/><rect x="3" y="5" width="1" height="1" fill="#FFFFFF"/><rect x="4" y="5" width="1" height="1" fill="#FFFFFF"/><rect x="5" y="5" width="1" height="1" fill="#FFFFFF"/><rect x="6" y="5" width="1" height="1" fill="#FFFFFF"/><rect x="7" y="5" width="1" height="1" fill="#FFFFFF"/><rect x="8" y="5" width="1" height="1" fill="#FFFFFF"/><rect x="9" y="5" width="1" height="1" fill="#FFFFFF"/><rect x="10" y="5" width="1" height="1" fill="#F1EFE2"/><rect x="11" y="5" width="1" height="1" fill="#FFFFFF"/><rect x="0" y="6" width="1" height="1" fill="#ACA899"/><rect x="1" y="6" width="1" height="1" fill="#716F64"/><rect x="2" y="6" width="1" height="1" fill="#FFFFFF"/><rect x="3" y="6" width="1" height="1" fill="#FFFFFF"/><rect x="4" y="6" width="1" height="1" fill="#FFFFFF"/><rect x="5" y="6" width="1" height="1" fill="#FFFFFF"/><rect x="6" y="6" width="1" height="1" fill="#FFFFFF"/><rect x="7" y="6" width="1" height="1" fill="#FFFFFF"/><rect x="8" y="6" width="1" height="1" fill="#FFFFFF"/><rect x="9" y="6" width="1" height="1" fill="#FFFFFF"/><rect x="10" y="6" width="1" height="1" fill="#F1EFE2"/><rect x="11" y="6" width="1" height="1" fill="#FFFFFF"/><rect x="0" y="7" width="1" height="1" fill="#ACA899"/><rect x="1" y="7" width="1" height="1" fill="#716F64"/><rect x="2" y="7" width="1" height="1" fill="#FFFFFF"/><rect x="3" y="7" width="1" height="1" fill="#FFFFFF"/><rect x="4" y="7" width="1" height="1" fill="#FFFFFF"/><rect x="5" y="7" width="1" height="1" fill="#FFFFFF"/><rect x="6" y="7" width="1" height="1" fill="#FFFFFF"/><rect x="7" y="7" width="1" height="1" fill="#FFFFFF"/><rect x="8" y="7" width="1" height="1" fill="#FFFFFF"/><rect x="9" y="7" width="1" height="1" fill="#FFFFFF"/><rect x="10" y="7" width="1" height="1" fill="#F1EFE2"/><rect x="11" y="7" width="1" height="1" fill="#FFFFFF"/><rect x="1" y="8" width="1" height="1" fill="#ACA899"/><rect x="2" y="8" width="1" height="1" fill="#716F64"/><rect x="3" y="8" width="1" height="1" fill="#FFFFFF"/><rect x="4" y="8" width="1" height="1" fill="#FFFFFF"/><rect x="5" y="8" width="1" height="1" fill="#FFFFFF"/><rect x="6" y="8" width="1" height="1" fill="#FFFFFF"/><rect x="7" y="8" width="1" height="1" fill="#FFFFFF"/><rect x="8" y="8" width="1" height="1" fill="#FFFFFF"/><rect x="9" y="8" width="1" height="1" fill="#F1EFE2"/><rect x="10" y="8" width="1" height="1" fill="#FFFFFF"/><rect x="1" y="9" width="1" height="1" fill="#ACA899"/><rect x="2" y="9" width="1" height="1" fill="#F1EFE2"/><rect x="3" y="9" width="1" height="1" fill="#F1EFE2"/><rect x="4" y="9" width="1" height="1" fill="#FFFFFF"/><rect x="5" y="9" width="1" height="1" fill="#FFFFFF"/><rect x="6" y="9" width="1" height="1" fill="#FFFFFF"/><rect x="7" y="9" width="1" height="1" fill="#FFFFFF"/><rect x="8" y="9" width="1" height="1" fill="#F1EFE2"/><rect x="9" y="9" width="1" height="1" fill="#F1EFE2"/><rect x="10" y="9" width="1" height="1" fill="#FFFFFF"/><rect x="2" y="10" width="1" height="1" fill="#FFFFFF"/><rect x="3" y="10" width="1" height="1" fill="#FFFFFF"/><rect x="4" y="10" width="1" height="1" fill="#F1EFE2"/><rect x="5" y="10" width="1" height="1" fill="#F1EFE2"/><rect x="6" y="10" width="1" height="1" fill="#F1EFE2"/><rect x="7" y="10" width="1" height="1" fill="#F1EFE2"/><rect x="8" y="10" width="1" height="1" fill="#FFFFFF"/><rect x="9" y="10" width="1" height="1" fill="#FFFFFF"/><rect x="4" y="11" width="1" height="1" fill="#FFFFFF"/><rect x="5" y="11" width="1" height="1" fill="#FFFFFF"/><rect x="6" y="11" width="1" height="1" fill="#FFFFFF"/><rect x="7" y="11" width="1" height="1" fill="#FFFFFF"/></svg>
<span class="t" style="left:650.00px;top:114px;font-size:12px;line-height:12px;letter-spacing:0.889px;color:#000;transform:scaleX(0.9);transform-origin:0 0;">40</span>
<svg style="left:631px;top:129px" width="12" height="12" shape-rendering="crispEdges"><rect x="4" y="0" width="1" height="1" fill="#ACA899"/><rect x="5" y="0" width="1" height="1" fill="#ACA899"/><rect x="6" y="0" width="1" height="1" fill="#ACA899"/><rect x="7" y="0" width="1" height="1" fill="#ACA899"/><rect x="2" y="1" width="1" height="1" fill="#ACA899"/><rect x="3" y="1" width="1" height="1" fill="#ACA899"/><rect x="4" y="1" width="1" height="1" fill="#716F64"/><rect x="5" y="1" width="1" height="1" fill="#716F64"/><rect x="6" y="1" width="1" height="1" fill="#716F64"/><rect x="7" y="1" width="1" height="1" fill="#716F64"/><rect x="8" y="1" width="1" height="1" fill="#ACA899"/><rect x="9" y="1" width="1" height="1" fill="#ACA899"/><rect x="1" y="2" width="1" height="1" fill="#ACA899"/><rect x="2" y="2" width="1" height="1" fill="#716F64"/><rect x="3" y="2" width="1" height="1" fill="#716F64"/><rect x="4" y="2" width="1" height="1" fill="#FFFFFF"/><rect x="5" y="2" width="1" height="1" fill="#FFFFFF"/><rect x="6" y="2" width="1" height="1" fill="#FFFFFF"/><rect x="7" y="2" width="1" height="1" fill="#FFFFFF"/><rect x="8" y="2" width="1" height="1" fill="#716F64"/><rect x="9" y="2" width="1" height="1" fill="#F1EFE2"/><rect x="10" y="2" width="1" height="1" fill="#FFFFFF"/><rect x="1" y="3" width="1" height="1" fill="#ACA899"/><rect x="2" y="3" width="1" height="1" fill="#716F64"/><rect x="3" y="3" width="1" height="1" fill="#FFFFFF"/><rect x="4" y="3" width="1" height="1" fill="#FFFFFF"/><rect x="5" y="3" width="1" height="1" fill="#FFFFFF"/><rect x="6" y="3" width="1" height="1" fill="#FFFFFF"/><rect x="7" y="3" width="1" height="1" fill="#FFFFFF"/><rect x="8" y="3" width="1" height="1" fill="#FFFFFF"/><rect x="9" y="3" width="1" height="1" fill="#F1EFE2"/><rect x="10" y="3" width="1" height="1" fill="#FFFFFF"/><rect x="0" y="4" width="1" height="1" fill="#ACA899"/><rect x="1" y="4" width="1" height="1" fill="#716F64"/><rect x="2" y="4" width="1" height="1" fill="#FFFFFF"/><rect x="3" y="4" width="1" height="1" fill="#FFFFFF"/><rect x="4" y="4" width="1" height="1" fill="#FFFFFF"/><rect x="5" y="4" width="1" height="1" fill="#FFFFFF"/><rect x="6" y="4" width="1" height="1" fill="#FFFFFF"/><rect x="7" y="4" width="1" height="1" fill="#FFFFFF"/><rect x="8" y="4" width="1" height="1" fill="#FFFFFF"/><rect x="9" y="4" width="1" height="1" fill="#FFFFFF"/><rect x="10" y="4" width="1" height="1" fill="#F1EFE2"/><rect x="11" y="4" width="1" height="1" fill="#FFFFFF"/><rect x="0" y="5" width="1" height="1" fill="#ACA899"/><rect x="1" y="5" width="1" height="1" fill="#716F64"/><rect x="2" y="5" width="1" height="1" fill="#FFFFFF"/><rect x="3" y="5" width="1" height="1" fill="#FFFFFF"/><rect x="4" y="5" width="1" height="1" fill="#FFFFFF"/><rect x="5" y="5" width="1" height="1" fill="#FFFFFF"/><rect x="6" y="5" width="1" height="1" fill="#FFFFFF"/><rect x="7" y="5" width="1" height="1" fill="#FFFFFF"/><rect x="8" y="5" width="1" height="1" fill="#FFFFFF"/><rect x="9" y="5" width="1" height="1" fill="#FFFFFF"/><rect x="10" y="5" width="1" height="1" fill="#F1EFE2"/><rect x="11" y="5" width="1" height="1" fill="#FFFFFF"/><rect x="0" y="6" width="1" height="1" fill="#ACA899"/><rect x="1" y="6" width="1" height="1" fill="#716F64"/><rect x="2" y="6" width="1" height="1" fill="#FFFFFF"/><rect x="3" y="6" width="1" height="1" fill="#FFFFFF"/><rect x="4" y="6" width="1" height="1" fill="#FFFFFF"/><rect x="5" y="6" width="1" height="1" fill="#FFFFFF"/><rect x="6" y="6" width="1" height="1" fill="#FFFFFF"/><rect x="7" y="6" width="1" height="1" fill="#FFFFFF"/><rect x="8" y="6" width="1" height="1" fill="#FFFFFF"/><rect x="9" y="6" width="1" height="1" fill="#FFFFFF"/><rect x="10" y="6" width="1" height="1" fill="#F1EFE2"/><rect x="11" y="6" width="1" height="1" fill="#FFFFFF"/><rect x="0" y="7" width="1" height="1" fill="#ACA899"/><rect x="1" y="7" width="1" height="1" fill="#716F64"/><rect x="2" y="7" width="1" height="1" fill="#FFFFFF"/><rect x="3" y="7" width="1" height="1" fill="#FFFFFF"/><rect x="4" y="7" width="1" height="1" fill="#FFFFFF"/><rect x="5" y="7" width="1" height="1" fill="#FFFFFF"/><rect x="6" y="7" width="1" height="1" fill="#FFFFFF"/><rect x="7" y="7" width="1" height="1" fill="#FFFFFF"/><rect x="8" y="7" width="1" height="1" fill="#FFFFFF"/><rect x="9" y="7" width="1" height="1" fill="#FFFFFF"/><rect x="10" y="7" width="1" height="1" fill="#F1EFE2"/><rect x="11" y="7" width="1" height="1" fill="#FFFFFF"/><rect x="1" y="8" width="1" height="1" fill="#ACA899"/><rect x="2" y="8" width="1" height="1" fill="#716F64"/><rect x="3" y="8" width="1" height="1" fill="#FFFFFF"/><rect x="4" y="8" width="1" height="1" fill="#FFFFFF"/><rect x="5" y="8" width="1" height="1" fill="#FFFFFF"/><rect x="6" y="8" width="1" height="1" fill="#FFFFFF"/><rect x="7" y="8" width="1" height="1" fill="#FFFFFF"/><rect x="8" y="8" width="1" height="1" fill="#FFFFFF"/><rect x="9" y="8" width="1" height="1" fill="#F1EFE2"/><rect x="10" y="8" width="1" height="1" fill="#FFFFFF"/><rect x="1" y="9" width="1" height="1" fill="#ACA899"/><rect x="2" y="9" width="1" height="1" fill="#F1EFE2"/><rect x="3" y="9" width="1" height="1" fill="#F1EFE2"/><rect x="4" y="9" width="1" height="1" fill="#FFFFFF"/><rect x="5" y="9" width="1" height="1" fill="#FFFFFF"/><rect x="6" y="9" width="1" height="1" fill="#FFFFFF"/><rect x="7" y="9" width="1" height="1" fill="#FFFFFF"/><rect x="8" y="9" width="1" height="1" fill="#F1EFE2"/><rect x="9" y="9" width="1" height="1" fill="#F1EFE2"/><rect x="10" y="9" width="1" height="1" fill="#FFFFFF"/><rect x="2" y="10" width="1" height="1" fill="#FFFFFF"/><rect x="3" y="10" width="1" height="1" fill="#FFFFFF"/><rect x="4" y="10" width="1" height="1" fill="#F1EFE2"/><rect x="5" y="10" width="1" height="1" fill="#F1EFE2"/><rect x="6" y="10" width="1" height="1" fill="#F1EFE2"/><rect x="7" y="10" width="1" height="1" fill="#F1EFE2"/><rect x="8" y="10" width="1" height="1" fill="#FFFFFF"/><rect x="9" y="10" width="1" height="1" fill="#FFFFFF"/><rect x="4" y="11" width="1" height="1" fill="#FFFFFF"/><rect x="5" y="11" width="1" height="1" fill="#FFFFFF"/><rect x="6" y="11" width="1" height="1" fill="#FFFFFF"/><rect x="7" y="11" width="1" height="1" fill="#FFFFFF"/><g transform="translate(4,4)"><rect x="1" y="0" width="1" height="1" fill="#000"/><rect x="2" y="0" width="1" height="1" fill="#000"/><rect x="0" y="1" width="1" height="1" fill="#000"/><rect x="1" y="1" width="1" height="1" fill="#000"/><rect x="2" y="1" width="1" height="1" fill="#000"/><rect x="3" y="1" width="1" height="1" fill="#000"/><rect x="0" y="2" width="1" height="1" fill="#000"/><rect x="1" y="2" width="1" height="1" fill="#000"/><rect x="2" y="2" width="1" height="1" fill="#000"/><rect x="3" y="2" width="1" height="1" fill="#000"/><rect x="1" y="3" width="1" height="1" fill="#000"/><rect x="2" y="3" width="1" height="1" fill="#000"/></g></svg>
<span class="t" style="left:650.00px;top:130px;font-size:12px;line-height:12px;letter-spacing:0.889px;color:#000;transform:scaleX(0.9);transform-origin:0 0;">50</span>
<div style="left:556px;top:112px;width:54px;height:34px;border:1px solid #ACA899;box-shadow:1px 1px 0 #FFFFFF, inset 1px 1px 0 #FFFFFF"></div>
<div style="left:566px;top:108px;width:13px;height:12px;background:#ECE9D8"></div>
<span class="t" style="left:568.60px;top:108px;font-size:12px;line-height:12px;letter-spacing:0.000px;color:#000;transform:scaleX(0.9);transform-origin:0 0;">N</span>
<div class="sunk" style="left:560px;top:123px;width:46px;height:17px;background:#fff"></div>
<div class="btn" style="left:590px;top:125px;width:15px;height:14px;"></div>
<svg style="left:595px;top:132px" width="7" height="4" shape-rendering="crispEdges" fill="#000"><rect x="0" y="0" width="7" height="1"/><rect x="1" y="1" width="5" height="1"/><rect x="2" y="2" width="3" height="1"/><rect x="3" y="3" width="1" height="1"/></svg>
<span class="t" style="left:565.00px;top:128px;font-size:12px;line-height:12px;letter-spacing:0.000px;color:#000;transform:scaleX(0.9);transform-origin:0 0;">4</span>
<div class="sunk" style="left:557px;top:163px;width:11px;height:11px;background:#fff"></div>
<svg style="left:560px;top:166px" width="7" height="7" shape-rendering="crispEdges" fill="#000"><rect x="6" y="0" width="1" height="1"/><rect x="5" y="1" width="1" height="1"/><rect x="6" y="1" width="1" height="1"/><rect x="0" y="2" width="1" height="1"/><rect x="4" y="2" width="1" height="1"/><rect x="5" y="2" width="1" height="1"/><rect x="6" y="2" width="1" height="1"/><rect x="0" y="3" width="1" height="1"/><rect x="1" y="3" width="1" height="1"/><rect x="3" y="3" width="1" height="1"/><rect x="4" y="3" width="1" height="1"/><rect x="5" y="3" width="1" height="1"/><rect x="0" y="4" width="1" height="1"/><rect x="1" y="4" width="1" height="1"/><rect x="2" y="4" width="1" height="1"/><rect x="3" y="4" width="1" height="1"/><rect x="4" y="4" width="1" height="1"/><rect x="1" y="5" width="1" height="1"/><rect x="2" y="5" width="1" height="1"/><rect x="3" y="5" width="1" height="1"/><rect x="2" y="6" width="1" height="1"/></svg>
<span class="t" style="left:577.00px;top:163px;font-size:12px;line-height:12px;letter-spacing:0.222px;color:#000;transform:scaleX(0.9);transform-origin:0 0;">(B)</span>
<span class="t" style="left:557.60px;top:188px;font-size:12px;line-height:12px;letter-spacing:0.315px;color:#008000;transform:scaleX(0.9);transform-origin:0 0;">Corr-ON</span>
<div class="btn" style="left:623px;top:158px;width:53px;height:19px;"></div>
<span class="t" style="left:637.00px;top:162px;font-size:12px;line-height:12px;letter-spacing:0.630px;color:#000;transform:scaleX(0.9);transform-origin:0 0;">Auto</span>
<div class="btn" style="left:623px;top:184px;width:53px;height:19px;"></div>
<span class="t" style="left:634.60px;top:189px;font-size:12px;line-height:12px;letter-spacing:0.583px;color:#fff;transform:scaleX(0.9);transform-origin:0 0;">Break</span>
<span class="t" style="left:633.60px;top:188px;font-size:12px;line-height:12px;letter-spacing:0.583px;color:#A8A494;transform:scaleX(0.9);transform-origin:0 0;">Break</span>
<div class="btn" style="left:623px;top:210px;width:53px;height:19px;"></div>
<span class="t" style="left:633.60px;top:214px;font-size:12px;line-height:12px;letter-spacing:0.833px;color:#000;transform:scaleX(0.9);transform-origin:0 0;">Reset</span>
<div class="btn" style="left:556px;top:210px;width:53px;height:19px;"></div>
<span class="t" style="left:561.80px;top:214px;font-size:12px;line-height:12px;letter-spacing:0.622px;color:#000;transform:scaleX(0.9);transform-origin:0 0;">SaveAs</span>
<div style="left:685px;top:41px;width:247px;height:1px;background:#FFFFFF"></div>
<div style="left:685px;top:41px;width:1px;height:195px;background:#FFFFFF"></div>
<div style="left:686px;top:42px;width:245px;height:1px;background:#F8F7F0"></div>
<div style="left:930px;top:41px;width:2px;height:195px;background:#ACA899"></div>
<div style="left:685px;top:235px;width:247px;height:1px;background:#ACA899"></div>
<div style="left:686px;top:43px;width:243px;height:1px;background:#ACA899"></div>
<div style="left:686px;top:43px;width:1px;height:190px;background:#ACA899"></div>
<div style="left:687px;top:44px;width:242px;height:1px;background:#716F64"></div>
<div style="left:687px;top:44px;width:1px;height:189px;background:#716F64"></div>
<div style="left:929px;top:43px;width:1px;height:192px;background:#FFFFFF"></div>
<div style="left:686px;top:233px;width:244px;height:2px;background:#FFFFFF"></div>
<div style="left:6px;top:237px;width:934px;height:17px;background:repeating-conic-gradient(#fff 0 25%, #ECE9D8 0 50%) 0 0/2px 2px"></div>
<div class="btn" style="left:6px;top:237px;width:14px;height:15px;"></div>
<svg style="left:10px;top:242px" width="4" height="7" shape-rendering="crispEdges" fill="#000"><rect x="0" y="3" width="1" height="1"/><rect x="1" y="2" width="1" height="3"/><rect x="2" y="1" width="1" height="5"/><rect x="3" y="0" width="1" height="7"/></svg>
<div class="btn" style="left:924px;top:237px;width:14px;height:15px;"></div>
<svg style="left:930px;top:242px" width="4" height="7" shape-rendering="crispEdges" fill="#000"><rect x="0" y="0" width="1" height="7"/><rect x="1" y="1" width="1" height="5"/><rect x="2" y="2" width="1" height="3"/><rect x="3" y="3" width="1" height="1"/></svg>
<div class="btn" style="left:433px;top:237px;width:15px;height:15px;"></div>
<div style="left:15px;top:264px;width:173px;height:1px;background:#ACA899"></div>
<div style="left:15px;top:264px;width:1px;height:173px;background:#ACA899"></div>
<div style="left:16px;top:437px;width:173px;height:1px;background:#FFFFFF"></div>
<div style="left:188px;top:265px;width:1px;height:173px;background:#FFFFFF"></div>
<div style="left:16px;top:265px;width:172px;height:172px;background:#000"></div>
<svg style="left:16px;top:265px" width="172" height="172" shape-rendering="crispEdges"><rect x="80" y="68" width="1" height="1" fill="#2A60D8"/><rect x="78" y="69" width="1" height="1" fill="#2A60D8"/><rect x="80" y="67" width="1" height="1" fill="#3C9CF0"/><rect x="84" y="68" width="1" height="1" fill="#2E6EE0"/><rect x="82" y="64" width="1" height="1" fill="#2A60D8"/><rect x="82" y="62" width="1" height="1" fill="#3A88F8"/><rect x="87" y="67" width="1" height="1" fill="#2E6EE0"/><rect x="85" y="63" width="1" height="1" fill="#3A88F8"/><rect x="80" y="66" width="1" height="1" fill="#2E6EE0"/><rect x="82" y="67" width="1" height="1" fill="#2458C8"/><rect x="84" y="63" width="1" height="1" fill="#2458C8"/><rect x="89" y="67" width="1" height="1" fill="#2E6EE0"/><rect x="87" y="64" width="1" height="1" fill="#2458C8"/><rect x="87" y="75" width="1" height="1" fill="#3C9CF0"/><rect x="88" y="66" width="1" height="1" fill="#3AB0F0"/><rect x="87" y="72" width="1" height="1" fill="#2458C8"/><rect x="80" y="75" width="1" height="1" fill="#2E6EE0"/><rect x="89" y="71" width="1" height="1" fill="#3C9CF0"/><rect x="85" y="64" width="1" height="1" fill="#3C9CF0"/><rect x="74" y="66" width="1" height="1" fill="#3C9CF0"/><rect x="84" y="65" width="1" height="1" fill="#3A88F8"/><rect x="92" y="67" width="1" height="1" fill="#2A60D8"/><rect x="82" y="74" width="1" height="1" fill="#3C9CF0"/><rect x="90" y="66" width="1" height="1" fill="#2E6EE0"/><rect x="87" y="66" width="1" height="1" fill="#2A60D8"/><rect x="83" y="69" width="1" height="1" fill="#48C8F0"/><rect x="86" y="71" width="1" height="1" fill="#2458C8"/><rect x="82" y="69" width="1" height="1" fill="#2A60D8"/><rect x="86" y="65" width="1" height="1" fill="#3A88F8"/><rect x="84" y="69" width="1" height="1" fill="#3A88F8"/><rect x="88" y="71" width="1" height="1" fill="#3C9CF0"/><rect x="88" y="63" width="1" height="1" fill="#3C9CF0"/><rect x="88" y="69" width="1" height="1" fill="#3C9CF0"/><rect x="85" y="73" width="1" height="1" fill="#2458C8"/><rect x="77" y="65" width="1" height="1" fill="#3A88F8"/><rect x="85" y="71" width="1" height="1" fill="#2A60D8"/><rect x="87" y="68" width="1" height="1" fill="#2E6EE0"/><rect x="88" y="68" width="1" height="1" fill="#2E6EE0"/><rect x="86" y="70" width="1" height="1" fill="#3A88F8"/><rect x="86" y="68" width="1" height="1" fill="#2458C8"/><rect x="78" y="62" width="1" height="1" fill="#2458C8"/><rect x="82" y="58" width="1" height="1" fill="#2E6EE0"/><rect x="79" y="67" width="1" height="1" fill="#2E6EE0"/><rect x="89" y="69" width="1" height="1" fill="#3A88F8"/><rect x="87" y="59" width="1" height="1" fill="#3C9CF0"/><rect x="91" y="62" width="1" height="1" fill="#2E6EE0"/><rect x="84" y="67" width="1" height="1" fill="#48C8F0"/><rect x="78" y="58" width="1" height="1" fill="#2458C8"/><rect x="80" y="70" width="1" height="1" fill="#3C9CF0"/><rect x="90" y="67" width="1" height="1" fill="#3A88F8"/><rect x="86" y="66" width="1" height="1" fill="#3C9CF0"/><rect x="85" y="67" width="1" height="1" fill="#2A60D8"/><rect x="85" y="69" width="1" height="1" fill="#3C9CF0"/><rect x="85" y="68" width="1" height="1" fill="#2E6EE0"/><rect x="83" y="58" width="1" height="1" fill="#3A88F8"/><rect x="83" y="67" width="1" height="1" fill="#3AB0F0"/><rect x="90" y="68" width="1" height="1" fill="#2458C8"/><rect x="62" y="82" width="1" height="1" fill="#3C9CF0"/><rect x="64" y="86" width="1" height="1" fill="#3A88F8"/><rect x="66" y="80" width="1" height="1" fill="#2E6EE0"/><rect x="60" y="88" width="1" height="1" fill="#2458C8"/><rect x="69" y="85" width="1" height="1" fill="#3C9CF0"/><rect x="64" y="91" width="1" height="1" fill="#2A60D8"/><rect x="64" y="84" width="1" height="1" fill="#2458C8"/><rect x="56" y="84" width="1" height="1" fill="#3A88F8"/><rect x="60" y="90" width="1" height="1" fill="#2E6EE0"/><rect x="58" y="90" width="1" height="1" fill="#3C9CF0"/><rect x="60" y="87" width="1" height="1" fill="#2E6EE0"/><rect x="60" y="84" width="1" height="1" fill="#2458C8"/><rect x="66" y="93" width="1" height="1" fill="#2458C8"/><rect x="59" y="85" width="1" height="1" fill="#3C9CF0"/><rect x="64" y="87" width="1" height="1" fill="#2A60D8"/><rect x="62" y="87" width="1" height="1" fill="#3A88F8"/><rect x="65" y="85" width="1" height="1" fill="#3A88F8"/><rect x="67" y="89" width="1" height="1" fill="#2A60D8"/><rect x="68" y="85" width="1" height="1" fill="#2E6EE0"/><rect x="65" y="82" width="1" height="1" fill="#2A60D8"/><rect x="62" y="83" width="1" height="1" fill="#2A60D8"/><rect x="66" y="92" width="1" height="1" fill="#2E6EE0"/><rect x="64" y="90" width="1" height="1" fill="#3C9CF0"/><rect x="60" y="86" width="1" height="1" fill="#2E6EE0"/><rect x="61" y="86" width="1" height="1" fill="#2A60D8"/><rect x="65" y="87" width="1" height="1" fill="#2A60D8"/><rect x="57" y="88" width="1" height="1" fill="#3C9CF0"/><rect x="71" y="81" width="1" height="1" fill="#2A60D8"/><rect x="63" y="88" width="1" height="1" fill="#2E6EE0"/><rect x="68" y="90" width="1" height="1" fill="#3A88F8"/><rect x="65" y="86" width="1" height="1" fill="#2458C8"/><rect x="65" y="90" width="1" height="1" fill="#2A60D8"/><rect x="62" y="79" width="1" height="1" fill="#3C9CF0"/><rect x="67" y="82" width="1" height="1" fill="#2A60D8"/><rect x="63" y="85" width="1" height="1" fill="#2E6EE0"/><rect x="67" y="84" width="1" height="1" fill="#3A88F8"/><rect x="67" y="98" width="1" height="1" fill="#3A88F8"/><rect x="66" y="85" width="1" height="1" fill="#58D8E8"/><rect x="70" y="90" width="1" height="1" fill="#3A88F8"/><rect x="66" y="91" width="1" height="1" fill="#2458C8"/><rect x="71" y="86" width="1" height="1" fill="#3C9CF0"/><rect x="68" y="84" width="1" height="1" fill="#2E6EE0"/><rect x="65" y="83" width="1" height="1" fill="#3AB0F0"/><rect x="66" y="84" width="1" height="1" fill="#2458C8"/><rect x="63" y="87" width="1" height="1" fill="#2A60D8"/><rect x="70" y="81" width="1" height="1" fill="#2A60D8"/><rect x="61" y="84" width="1" height="1" fill="#2458C8"/><rect x="105" y="87" width="1" height="1" fill="#3A88F8"/><rect x="107" y="83" width="1" height="1" fill="#2A60D8"/><rect x="104" y="80" width="1" height="1" fill="#2E6EE0"/><rect x="106" y="88" width="1" height="1" fill="#3A88F8"/><rect x="105" y="86" width="1" height="1" fill="#58D8E8"/><rect x="106" y="85" width="1" height="1" fill="#48C8F0"/><rect x="105" y="88" width="1" height="1" fill="#3AB0F0"/><rect x="102" y="85" width="1" height="1" fill="#2A60D8"/><rect x="107" y="87" width="1" height="1" fill="#58D8E8"/><rect x="108" y="86" width="1" height="1" fill="#58D8E8"/><rect x="110" y="88" width="1" height="1" fill="#3C9CF0"/><rect x="99" y="91" width="1" height="1" fill="#3A88F8"/><rect x="108" y="82" width="1" height="1" fill="#3C9CF0"/><rect x="109" y="85" width="1" height="1" fill="#3AB0F0"/><rect x="104" y="90" width="1" height="1" fill="#2458C8"/><rect x="103" y="85" width="1" height="1" fill="#2458C8"/><rect x="111" y="87" width="1" height="1" fill="#3A88F8"/><rect x="101" y="89" width="1" height="1" fill="#2458C8"/><rect x="105" y="85" width="1" height="1" fill="#48C8F0"/><rect x="112" y="89" width="1" height="1" fill="#3C9CF0"/><rect x="105" y="92" width="1" height="1" fill="#2E6EE0"/><rect x="111" y="84" width="1" height="1" fill="#3A88F8"/><rect x="104" y="85" width="1" height="1" fill="#58D8E8"/><rect x="110" y="90" width="1" height="1" fill="#3A88F8"/><rect x="108" y="88" width="1" height="1" fill="#3C9CF0"/><rect x="102" y="83" width="1" height="1" fill="#2458C8"/><rect x="106" y="82" width="1" height="1" fill="#2458C8"/><rect x="105" y="83" width="1" height="1" fill="#58D8E8"/><rect x="107" y="81" width="1" height="1" fill="#2458C8"/><rect x="101" y="82" width="1" height="1" fill="#3A88F8"/><rect x="102" y="82" width="1" height="1" fill="#3A88F8"/><rect x="101" y="86" width="1" height="1" fill="#2E6EE0"/><rect x="106" y="78" width="1" height="1" fill="#3A88F8"/><rect x="103" y="83" width="1" height="1" fill="#48C8F0"/><rect x="103" y="89" width="1" height="1" fill="#2E6EE0"/><rect x="107" y="82" width="1" height="1" fill="#3A88F8"/><rect x="100" y="88" width="1" height="1" fill="#2458C8"/><rect x="102" y="89" width="1" height="1" fill="#2458C8"/><rect x="104" y="91" width="1" height="1" fill="#3A88F8"/><rect x="103" y="87" width="1" height="1" fill="#58D8E8"/><rect x="107" y="86" width="1" height="1" fill="#48C8F0"/><rect x="108" y="87" width="1" height="1" fill="#2E6EE0"/><rect x="104" y="82" width="1" height="1" fill="#2E6EE0"/><rect x="102" y="92" width="1" height="1" fill="#3C9CF0"/><rect x="99" y="83" width="1" height="1" fill="#2458C8"/><rect x="107" y="95" width="1" height="1" fill="#2A60D8"/><rect x="106" y="89" width="1" height="1" fill="#58D8E8"/><rect x="103" y="88" width="1" height="1" fill="#3AB0F0"/><rect x="106" y="84" width="1" height="1" fill="#3C9CF0"/><rect x="97" y="82" width="1" height="1" fill="#3C9CF0"/><rect x="109" y="87" width="1" height="1" fill="#2E6EE0"/><rect x="104" y="88" width="1" height="1" fill="#58D8E8"/><rect x="104" y="89" width="1" height="1" fill="#58D8E8"/><rect x="104" y="79" width="1" height="1" fill="#2458C8"/><rect x="109" y="81" width="1" height="1" fill="#3C9CF0"/><rect x="110" y="85" width="1" height="1" fill="#2E6EE0"/><rect x="106" y="91" width="1" height="1" fill="#3A88F8"/><rect x="99" y="88" width="1" height="1" fill="#2458C8"/><rect x="100" y="80" width="1" height="1" fill="#2458C8"/><rect x="102" y="86" width="1" height="1" fill="#2A60D8"/><rect x="113" y="88" width="1" height="1" fill="#3C9CF0"/><rect x="111" y="85" width="1" height="1" fill="#2E6EE0"/><rect x="104" y="84" width="1" height="1" fill="#58D8E8"/><rect x="109" y="84" width="1" height="1" fill="#58D8E8"/><rect x="110" y="92" width="1" height="1" fill="#3A88F8"/><rect x="99" y="78" width="1" height="1" fill="#2A60D8"/><rect x="110" y="87" width="1" height="1" fill="#3A88F8"/><rect x="108" y="80" width="1" height="1" fill="#2E6EE0"/><rect x="103" y="90" width="1" height="1" fill="#3C9CF0"/><rect x="105" y="84" width="1" height="1" fill="#2A60D8"/><rect x="107" y="84" width="1" height="1" fill="#3C9CF0"/><rect x="107" y="91" width="1" height="1" fill="#3C9CF0"/><rect x="86" y="111" width="1" height="1" fill="#3C9CF0"/><rect x="93" y="104" width="1" height="1" fill="#3C9CF0"/><rect x="87" y="108" width="1" height="1" fill="#2E6EE0"/><rect x="82" y="111" width="1" height="1" fill="#3C9CF0"/><rect x="82" y="102" width="1" height="1" fill="#2E6EE0"/><rect x="84" y="107" width="1" height="1" fill="#2E6EE0"/><rect x="85" y="111" width="1" height="1" fill="#2E6EE0"/><rect x="89" y="102" width="1" height="1" fill="#2A60D8"/><rect x="88" y="111" width="1" height="1" fill="#2458C8"/><rect x="90" y="105" width="1" height="1" fill="#2E6EE0"/><rect x="85" y="109" width="1" height="1" fill="#2458C8"/><rect x="84" y="110" width="1" height="1" fill="#2458C8"/><rect x="82" y="108" width="1" height="1" fill="#3AB0F0"/><rect x="89" y="110" width="1" height="1" fill="#3A88F8"/><rect x="85" y="108" width="1" height="1" fill="#2E6EE0"/><rect x="86" y="108" width="1" height="1" fill="#3C9CF0"/><rect x="84" y="108" width="1" height="1" fill="#3C9CF0"/><rect x="86" y="106" width="1" height="1" fill="#3A88F8"/><rect x="86" y="104" width="1" height="1" fill="#3C9CF0"/><rect x="81" y="103" width="1" height="1" fill="#2458C8"/><rect x="91" y="106" width="1" height="1" fill="#2A60D8"/><rect x="82" y="107" width="1" height="1" fill="#58D8E8"/><rect x="84" y="106" width="1" height="1" fill="#2A60D8"/><rect x="83" y="109" width="1" height="1" fill="#3AB0F0"/><rect x="88" y="112" width="1" height="1" fill="#2A60D8"/><rect x="85" y="112" width="1" height="1" fill="#2A60D8"/><rect x="83" y="97" width="1" height="1" fill="#3A88F8"/><rect x="87" y="110" width="1" height="1" fill="#2458C8"/><rect x="81" y="114" width="1" height="1" fill="#3C9CF0"/><rect x="88" y="104" width="1" height="1" fill="#3A88F8"/><rect x="88" y="105" width="1" height="1" fill="#2A60D8"/><rect x="87" y="106" width="1" height="1" fill="#2458C8"/><rect x="83" y="106" width="1" height="1" fill="#2458C8"/><rect x="84" y="104" width="1" height="1" fill="#2458C8"/><rect x="86" y="105" width="1" height="1" fill="#3AB0F0"/><rect x="81" y="108" width="1" height="1" fill="#3A88F8"/><rect x="83" y="112" width="1" height="1" fill="#3C9CF0"/><rect x="81" y="104" width="1" height="1" fill="#3A88F8"/><rect x="87" y="109" width="1" height="1" fill="#3A88F8"/><rect x="84" y="111" width="1" height="1" fill="#2E6EE0"/><rect x="84" y="101" width="1" height="1" fill="#3C9CF0"/><rect x="82" y="105" width="1" height="1" fill="#2A60D8"/><rect x="89" y="105" width="1" height="1" fill="#2458C8"/><rect x="74" y="108" width="1" height="1" fill="#3C9CF0"/><rect x="83" y="111" width="1" height="1" fill="#2E6EE0"/><rect x="84" y="102" width="1" height="1" fill="#2458C8"/><rect x="90" y="102" width="1" height="1" fill="#3C9CF0"/><rect x="85" y="114" width="1" height="1" fill="#3C9CF0"/><rect x="83" y="103" width="1" height="1" fill="#2458C8"/><rect x="80" y="100" width="1" height="1" fill="#2458C8"/><rect x="87" y="104" width="1" height="1" fill="#3A88F8"/><rect x="72" y="101" width="1" height="1" fill="#2A60D8"/><rect x="76" y="65" width="1" height="1" fill="#2A60D8"/><rect x="94" y="107" width="1" height="1" fill="#2A60D8"/><rect x="114" y="87" width="1" height="1" fill="#2A60D8"/><rect x="94" y="99" width="1" height="1" fill="#2A60D8"/><rect x="92" y="116" width="1" height="1" fill="#2A60D8"/><rect x="72" y="88" width="1" height="1" fill="#2A60D8"/><rect x="101" y="96" width="1" height="1" fill="#2A60D8"/></svg>
<div style="left:198px;top:263px;width:16px;height:176px;background:repeating-conic-gradient(#fff 0 25%, #ECE9D8 0 50%) 0 0/2px 2px"></div>
<div class="btn" style="left:198px;top:263px;width:14px;height:16px;"></div>
<svg style="left:204px;top:270px" width="5" height="3" shape-rendering="crispEdges" fill="#000"><rect x="2" y="0" width="1" height="1"/><rect x="1" y="1" width="3" height="1"/><rect x="0" y="2" width="5" height="1"/></svg>
<div class="btn" style="left:198px;top:422px;width:14px;height:15px;"></div>
<svg style="left:204px;top:431px" width="5" height="3" shape-rendering="crispEdges" fill="#000"><rect x="0" y="0" width="5" height="1"/><rect x="1" y="1" width="3" height="1"/><rect x="2" y="2" width="1" height="1"/></svg>
<div class="btn" style="left:198px;top:392px;width:14px;height:15px;"></div>
<div style="left:223px;top:264px;width:251px;height:171px;border:1px solid;border-color:#FFFFFF #ACA899 #ACA899 #FFFFFF;box-shadow:inset 1px 1px 0 #ACA899, inset -1px -1px 0 #FFFFFF"></div>
<div class="sunk" style="left:233px;top:276px;width:64px;height:18px;background:#fff"></div>
<span class="t" style="left:236.50px;top:280px;font-size:12px;line-height:12px;letter-spacing:0.933px;color:#000;transform:scaleX(0.9);transform-origin:0 0;">602,81</span>
<span class="t" style="left:308.00px;top:281px;font-size:12px;line-height:12px;letter-spacing:0.000px;color:#000;transform:scaleX(0.9);transform-origin:0 0;">Carrier</span>
<div class="sunk" style="left:233px;top:302px;width:64px;height:18px;background:#fff"></div>
<span class="t" style="left:236.50px;top:306px;font-size:12px;line-height:12px;letter-spacing:1.389px;color:#000;transform:scaleX(0.9);transform-origin:0 0;">63,85</span>
<span class="t" style="left:308.00px;top:307px;font-size:12px;line-height:12px;letter-spacing:-1.000px;color:#000;transform:scaleX(0.9);transform-origin:0 0;">BR</span>
<div class="sunk" style="left:233px;top:328px;width:64px;height:18px;background:#fff"></div>
<div class="btn" style="left:281px;top:330px;width:15px;height:15px;"></div>
<svg style="left:286px;top:338px" width="7" height="4" shape-rendering="crispEdges" fill="#000"><rect x="0" y="0" width="7" height="1"/><rect x="1" y="1" width="5" height="1"/><rect x="2" y="2" width="3" height="1"/><rect x="3" y="3" width="1" height="1"/></svg>
<span class="t" style="left:237.90px;top:333px;font-size:12px;line-height:12px;letter-spacing:0.000px;color:#000;transform:scaleX(0.9);transform-origin:0 0;">4</span>
<span class="t" style="left:309.70px;top:334px;font-size:12px;line-height:12px;letter-spacing:-0.222px;color:#000;transform:scaleX(0.9);transform-origin:0 0;">n-Ary</span>
<div class="sunk" style="left:233px;top:354px;width:11px;height:11px;background:#fff"></div>
<svg style="left:236px;top:357px" width="7" height="7" shape-rendering="crispEdges" fill="#000"><rect x="6" y="0" width="1" height="1"/><rect x="5" y="1" width="1" height="1"/><rect x="6" y="1" width="1" height="1"/><rect x="0" y="2" width="1" height="1"/><rect x="4" y="2" width="1" height="1"/><rect x="5" y="2" width="1" height="1"/><rect x="6" y="2" width="1" height="1"/><rect x="0" y="3" width="1" height="1"/><rect x="1" y="3" width="1" height="1"/><rect x="3" y="3" width="1" height="1"/><rect x="4" y="3" width="1" height="1"/><rect x="5" y="3" width="1" height="1"/><rect x="0" y="4" width="1" height="1"/><rect x="1" y="4" width="1" height="1"/><rect x="2" y="4" width="1" height="1"/><rect x="3" y="4" width="1" height="1"/><rect x="4" y="4" width="1" height="1"/><rect x="1" y="5" width="1" height="1"/><rect x="2" y="5" width="1" height="1"/><rect x="3" y="5" width="1" height="1"/><rect x="2" y="6" width="1" height="1"/></svg>
<span class="t" style="left:252.90px;top:354px;font-size:12px;line-height:12px;letter-spacing:0.476px;color:#000;transform:scaleX(0.9);transform-origin:0 0;">Synch BR</span>
<div class="sunk" style="left:233px;top:373px;width:11px;height:11px;background:#fff"></div>
<svg style="left:236px;top:376px" width="7" height="7" shape-rendering="crispEdges" fill="#000"><rect x="6" y="0" width="1" height="1"/><rect x="5" y="1" width="1" height="1"/><rect x="6" y="1" width="1" height="1"/><rect x="0" y="2" width="1" height="1"/><rect x="4" y="2" width="1" height="1"/><rect x="5" y="2" width="1" height="1"/><rect x="6" y="2" width="1" height="1"/><rect x="0" y="3" width="1" height="1"/><rect x="1" y="3" width="1" height="1"/><rect x="3" y="3" width="1" height="1"/><rect x="4" y="3" width="1" height="1"/><rect x="5" y="3" width="1" height="1"/><rect x="0" y="4" width="1" height="1"/><rect x="1" y="4" width="1" height="1"/><rect x="2" y="4" width="1" height="1"/><rect x="3" y="4" width="1" height="1"/><rect x="4" y="4" width="1" height="1"/><rect x="1" y="5" width="1" height="1"/><rect x="2" y="5" width="1" height="1"/><rect x="3" y="5" width="1" height="1"/><rect x="2" y="6" width="1" height="1"/></svg>
<span class="t" style="left:252.90px;top:373px;font-size:12px;line-height:12px;letter-spacing:0.611px;color:#000;transform:scaleX(0.9);transform-origin:0 0;">NonStop</span>
<div class="sunk" style="left:233px;top:393px;width:11px;height:11px;background:#fff"></div>
<span class="t" style="left:252.90px;top:393px;font-size:12px;line-height:12px;letter-spacing:0.481px;color:#000;transform:scaleX(0.9);transform-origin:0 0;">RRC filter</span>
<div style="left:232px;top:413px;width:91px;height:1px;background:#ACA899"></div>
<div style="left:232px;top:413px;width:1px;height:17px;background:#ACA899"></div>
<div style="left:232px;top:429px;width:91px;height:1px;background:#FFFFFF"></div>
<div style="left:322px;top:413px;width:1px;height:17px;background:#FFFFFF"></div>
<div style="left:233px;top:414px;width:89px;height:15px;background:repeating-conic-gradient(#fff 0 25%, #ECE9D8 0 50%) 0 0/2px 2px"></div>
<div class="btn" style="left:233px;top:414px;width:15px;height:13px;"></div>
<svg style="left:239px;top:419px" width="3" height="5" shape-rendering="crispEdges" fill="#000"><rect x="0" y="2" width="1" height="1"/><rect x="1" y="1" width="1" height="3"/><rect x="2" y="0" width="1" height="5"/></svg>
<div class="btn" style="left:305px;top:414px;width:15px;height:13px;"></div>
<svg style="left:314px;top:419px" width="3" height="5" shape-rendering="crispEdges" fill="#000"><rect x="0" y="0" width="1" height="5"/><rect x="1" y="1" width="1" height="3"/><rect x="2" y="2" width="1" height="1"/></svg>
<div class="btn" style="left:269px;top:414px;width:15px;height:13px;"></div>
<span class="t" style="left:327.80px;top:415px;font-size:12px;line-height:12px;letter-spacing:0.833px;color:#ACA899;transform:scaleX(0.9);transform-origin:0 0;">0,5</span>
<div style="left:377px;top:276px;width:89px;height:66px;border:1px solid #ACA899;box-shadow:1px 1px 0 #FFFFFF, inset 1px 1px 0 #FFFFFF"></div>
<div style="left:383px;top:270px;width:26px;height:12px;background:#ECE9D8"></div>
<span class="t" style="left:385.60px;top:271px;font-size:12px;line-height:12px;letter-spacing:0.000px;color:#000;transform:scaleX(0.9);transform-origin:0 0;">PLL</span>
<svg style="left:386px;top:287px" width="12" height="12" shape-rendering="crispEdges"><rect x="4" y="0" width="1" height="1" fill="#ACA899"/><rect x="5" y="0" width="1" height="1" fill="#ACA899"/><rect x="6" y="0" width="1" height="1" fill="#ACA899"/><rect x="7" y="0" width="1" height="1" fill="#ACA899"/><rect x="2" y="1" width="1" height="1" fill="#ACA899"/><rect x="3" y="1" width="1" height="1" fill="#ACA899"/><rect x="4" y="1" width="1" height="1" fill="#716F64"/><rect x="5" y="1" width="1" height="1" fill="#716F64"/><rect x="6" y="1" width="1" height="1" fill="#716F64"/><rect x="7" y="1" width="1" height="1" fill="#716F64"/><rect x="8" y="1" width="1" height="1" fill="#ACA899"/><rect x="9" y="1" width="1" height="1" fill="#ACA899"/><rect x="1" y="2" width="1" height="1" fill="#ACA899"/><rect x="2" y="2" width="1" height="1" fill="#716F64"/><rect x="3" y="2" width="1" height="1" fill="#716F64"/><rect x="4" y="2" width="1" height="1" fill="#FFFFFF"/><rect x="5" y="2" width="1" height="1" fill="#FFFFFF"/><rect x="6" y="2" width="1" height="1" fill="#FFFFFF"/><rect x="7" y="2" width="1" height="1" fill="#FFFFFF"/><rect x="8" y="2" width="1" height="1" fill="#716F64"/><rect x="9" y="2" width="1" height="1" fill="#F1EFE2"/><rect x="10" y="2" width="1" height="1" fill="#FFFFFF"/><rect x="1" y="3" width="1" height="1" fill="#ACA899"/><rect x="2" y="3" width="1" height="1" fill="#716F64"/><rect x="3" y="3" width="1" height="1" fill="#FFFFFF"/><rect x="4" y="3" width="1" height="1" fill="#FFFFFF"/><rect x="5" y="3" width="1" height="1" fill="#FFFFFF"/><rect x="6" y="3" width="1" height="1" fill="#FFFFFF"/><rect x="7" y="3" width="1" height="1" fill="#FFFFFF"/><rect x="8" y="3" width="1" height="1" fill="#FFFFFF"/><rect x="9" y="3" width="1" height="1" fill="#F1EFE2"/><rect x="10" y="3" width="1" height="1" fill="#FFFFFF"/><rect x="0" y="4" width="1" height="1" fill="#ACA899"/><rect x="1" y="4" width="1" height="1" fill="#716F64"/><rect x="2" y="4" width="1" height="1" fill="#FFFFFF"/><rect x="3" y="4" width="1" height="1" fill="#FFFFFF"/><rect x="4" y="4" width="1" height="1" fill="#FFFFFF"/><rect x="5" y="4" width="1" height="1" fill="#FFFFFF"/><rect x="6" y="4" width="1" height="1" fill="#FFFFFF"/><rect x="7" y="4" width="1" height="1" fill="#FFFFFF"/><rect x="8" y="4" width="1" height="1" fill="#FFFFFF"/><rect x="9" y="4" width="1" height="1" fill="#FFFFFF"/><rect x="10" y="4" width="1" height="1" fill="#F1EFE2"/><rect x="11" y="4" width="1" height="1" fill="#FFFFFF"/><rect x="0" y="5" width="1" height="1" fill="#ACA899"/><rect x="1" y="5" width="1" height="1" fill="#716F64"/><rect x="2" y="5" width="1" height="1" fill="#FFFFFF"/><rect x="3" y="5" width="1" height="1" fill="#FFFFFF"/><rect x="4" y="5" width="1" height="1" fill="#FFFFFF"/><rect x="5" y="5" width="1" height="1" fill="#FFFFFF"/><rect x="6" y="5" width="1" height="1" fill="#FFFFFF"/><rect x="7" y="5" width="1" height="1" fill="#FFFFFF"/><rect x="8" y="5" width="1" height="1" fill="#FFFFFF"/><rect x="9" y="5" width="1" height="1" fill="#FFFFFF"/><rect x="10" y="5" width="1" height="1" fill="#F1EFE2"/><rect x="11" y="5" width="1" height="1" fill="#FFFFFF"/><rect x="0" y="6" width="1" height="1" fill="#ACA899"/><rect x="1" y="6" width="1" height="1" fill="#716F64"/><rect x="2" y="6" width="1" height="1" fill="#FFFFFF"/><rect x="3" y="6" width="1" height="1" fill="#FFFFFF"/><rect x="4" y="6" width="1" height="1" fill="#FFFFFF"/><rect x="5" y="6" width="1" height="1" fill="#FFFFFF"/><rect x="6" y="6" width="1" height="1" fill="#FFFFFF"/><rect x="7" y="6" width="1" height="1" fill="#FFFFFF"/><rect x="8" y="6" width="1" height="1" fill="#FFFFFF"/><rect x="9" y="6" width="1" height="1" fill="#FFFFFF"/><rect x="10" y="6" width="1" height="1" fill="#F1EFE2"/><rect x="11" y="6" width="1" height="1" fill="#FFFFFF"/><rect x="0" y="7" width="1" height="1" fill="#ACA899"/><rect x="1" y="7" width="1" height="1" fill="#716F64"/><rect x="2" y="7" width="1" height="1" fill="#FFFFFF"/><rect x="3" y="7" width="1" height="1" fill="#FFFFFF"/><rect x="4" y="7" width="1" height="1" fill="#FFFFFF"/><rect x="5" y="7" width="1" height="1" fill="#FFFFFF"/><rect x="6" y="7" width="1" height="1" fill="#FFFFFF"/><rect x="7" y="7" width="1" height="1" fill="#FFFFFF"/><rect x="8" y="7" width="1" height="1" fill="#FFFFFF"/><rect x="9" y="7" width="1" height="1" fill="#FFFFFF"/><rect x="10" y="7" width="1" height="1" fill="#F1EFE2"/><rect x="11" y="7" width="1" height="1" fill="#FFFFFF"/><rect x="1" y="8" width="1" height="1" fill="#ACA899"/><rect x="2" y="8" width="1" height="1" fill="#716F64"/><rect x="3" y="8" width="1" height="1" fill="#FFFFFF"/><rect x="4" y="8" width="1" height="1" fill="#FFFFFF"/><rect x="5" y="8" width="1" height="1" fill="#FFFFFF"/><rect x="6" y="8" width="1" height="1" fill="#FFFFFF"/><rect x="7" y="8" width="1" height="1" fill="#FFFFFF"/><rect x="8" y="8" width="1" height="1" fill="#FFFFFF"/><rect x="9" y="8" width="1" height="1" fill="#F1EFE2"/><rect x="10" y="8" width="1" height="1" fill="#FFFFFF"/><rect x="1" y="9" width="1" height="1" fill="#ACA899"/><rect x="2" y="9" width="1" height="1" fill="#F1EFE2"/><rect x="3" y="9" width="1" height="1" fill="#F1EFE2"/><rect x="4" y="9" width="1" height="1" fill="#FFFFFF"/><rect x="5" y="9" width="1" height="1" fill="#FFFFFF"/><rect x="6" y="9" width="1" height="1" fill="#FFFFFF"/><rect x="7" y="9" width="1" height="1" fill="#FFFFFF"/><rect x="8" y="9" width="1" height="1" fill="#F1EFE2"/><rect x="9" y="9" width="1" height="1" fill="#F1EFE2"/><rect x="10" y="9" width="1" height="1" fill="#FFFFFF"/><rect x="2" y="10" width="1" height="1" fill="#FFFFFF"/><rect x="3" y="10" width="1" height="1" fill="#FFFFFF"/><rect x="4" y="10" width="1" height="1" fill="#F1EFE2"/><rect x="5" y="10" width="1" height="1" fill="#F1EFE2"/><rect x="6" y="10" width="1" height="1" fill="#F1EFE2"/><rect x="7" y="10" width="1" height="1" fill="#F1EFE2"/><rect x="8" y="10" width="1" height="1" fill="#FFFFFF"/><rect x="9" y="10" width="1" height="1" fill="#FFFFFF"/><rect x="4" y="11" width="1" height="1" fill="#FFFFFF"/><rect x="5" y="11" width="1" height="1" fill="#FFFFFF"/><rect x="6" y="11" width="1" height="1" fill="#FFFFFF"/><rect x="7" y="11" width="1" height="1" fill="#FFFFFF"/></svg>
<span class="t" style="left:405.00px;top:287px;font-size:12px;line-height:12px;letter-spacing:0.278px;color:#000;transform:scaleX(0.9);transform-origin:0 0;">Quick</span>
<svg style="left:386px;top:306px" width="12" height="12" shape-rendering="crispEdges"><rect x="4" y="0" width="1" height="1" fill="#ACA899"/><rect x="5" y="0" width="1" height="1" fill="#ACA899"/><rect x="6" y="0" width="1" height="1" fill="#ACA899"/><rect x="7" y="0" width="1" height="1" fill="#ACA899"/><rect x="2" y="1" width="1" height="1" fill="#ACA899"/><rect x="3" y="1" width="1" height="1" fill="#ACA899"/><rect x="4" y="1" width="1" height="1" fill="#716F64"/><rect x="5" y="1" width="1" height="1" fill="#716F64"/><rect x="6" y="1" width="1" height="1" fill="#716F64"/><rect x="7" y="1" width="1" height="1" fill="#716F64"/><rect x="8" y="1" width="1" height="1" fill="#ACA899"/><rect x="9" y="1" width="1" height="1" fill="#ACA899"/><rect x="1" y="2" width="1" height="1" fill="#ACA899"/><rect x="2" y="2" width="1" height="1" fill="#716F64"/><rect x="3" y="2" width="1" height="1" fill="#716F64"/><rect x="4" y="2" width="1" height="1" fill="#FFFFFF"/><rect x="5" y="2" width="1" height="1" fill="#FFFFFF"/><rect x="6" y="2" width="1" height="1" fill="#FFFFFF"/><rect x="7" y="2" width="1" height="1" fill="#FFFFFF"/><rect x="8" y="2" width="1" height="1" fill="#716F64"/><rect x="9" y="2" width="1" height="1" fill="#F1EFE2"/><rect x="10" y="2" width="1" height="1" fill="#FFFFFF"/><rect x="1" y="3" width="1" height="1" fill="#ACA899"/><rect x="2" y="3" width="1" height="1" fill="#716F64"/><rect x="3" y="3" width="1" height="1" fill="#FFFFFF"/><rect x="4" y="3" width="1" height="1" fill="#FFFFFF"/><rect x="5" y="3" width="1" height="1" fill="#FFFFFF"/><rect x="6" y="3" width="1" height="1" fill="#FFFFFF"/><rect x="7" y="3" width="1" height="1" fill="#FFFFFF"/><rect x="8" y="3" width="1" height="1" fill="#FFFFFF"/><rect x="9" y="3" width="1" height="1" fill="#F1EFE2"/><rect x="10" y="3" width="1" height="1" fill="#FFFFFF"/><rect x="0" y="4" width="1" height="1" fill="#ACA899"/><rect x="1" y="4" width="1" height="1" fill="#716F64"/><rect x="2" y="4" width="1" height="1" fill="#FFFFFF"/><rect x="3" y="4" width="1" height="1" fill="#FFFFFF"/><rect x="4" y="4" width="1" height="1" fill="#FFFFFF"/><rect x="5" y="4" width="1" height="1" fill="#FFFFFF"/><rect x="6" y="4" width="1" height="1" fill="#FFFFFF"/><rect x="7" y="4" width="1" height="1" fill="#FFFFFF"/><rect x="8" y="4" width="1" height="1" fill="#FFFFFF"/><rect x="9" y="4" width="1" height="1" fill="#FFFFFF"/><rect x="10" y="4" width="1" height="1" fill="#F1EFE2"/><rect x="11" y="4" width="1" height="1" fill="#FFFFFF"/><rect x="0" y="5" width="1" height="1" fill="#ACA899"/><rect x="1" y="5" width="1" height="1" fill="#716F64"/><rect x="2" y="5" width="1" height="1" fill="#FFFFFF"/><rect x="3" y="5" width="1" height="1" fill="#FFFFFF"/><rect x="4" y="5" width="1" height="1" fill="#FFFFFF"/><rect x="5" y="5" width="1" height="1" fill="#FFFFFF"/><rect x="6" y="5" width="1" height="1" fill="#FFFFFF"/><rect x="7" y="5" width="1" height="1" fill="#FFFFFF"/><rect x="8" y="5" width="1" height="1" fill="#FFFFFF"/><rect x="9" y="5" width="1" height="1" fill="#FFFFFF"/><rect x="10" y="5" width="1" height="1" fill="#F1EFE2"/><rect x="11" y="5" width="1" height="1" fill="#FFFFFF"/><rect x="0" y="6" width="1" height="1" fill="#ACA899"/><rect x="1" y="6" width="1" height="1" fill="#716F64"/><rect x="2" y="6" width="1" height="1" fill="#FFFFFF"/><rect x="3" y="6" width="1" height="1" fill="#FFFFFF"/><rect x="4" y="6" width="1" height="1" fill="#FFFFFF"/><rect x="5" y="6" width="1" height="1" fill="#FFFFFF"/><rect x="6" y="6" width="1" height="1" fill="#FFFFFF"/><rect x="7" y="6" width="1" height="1" fill="#FFFFFF"/><rect x="8" y="6" width="1" height="1" fill="#FFFFFF"/><rect x="9" y="6" width="1" height="1" fill="#FFFFFF"/><rect x="10" y="6" width="1" height="1" fill="#F1EFE2"/><rect x="11" y="6" width="1" height="1" fill="#FFFFFF"/><rect x="0" y="7" width="1" height="1" fill="#ACA899"/><rect x="1" y="7" width="1" height="1" fill="#716F64"/><rect x="2" y="7" width="1" height="1" fill="#FFFFFF"/><rect x="3" y="7" width="1" height="1" fill="#FFFFFF"/><rect x="4" y="7" width="1" height="1" fill="#FFFFFF"/><rect x="5" y="7" width="1" height="1" fill="#FFFFFF"/><rect x="6" y="7" width="1" height="1" fill="#FFFFFF"/><rect x="7" y="7" width="1" height="1" fill="#FFFFFF"/><rect x="8" y="7" width="1" height="1" fill="#FFFFFF"/><rect x="9" y="7" width="1" height="1" fill="#FFFFFF"/><rect x="10" y="7" width="1" height="1" fill="#F1EFE2"/><rect x="11" y="7" width="1" height="1" fill="#FFFFFF"/><rect x="1" y="8" width="1" height="1" fill="#ACA899"/><rect x="2" y="8" width="1" height="1" fill="#716F64"/><rect x="3" y="8" width="1" height="1" fill="#FFFFFF"/><rect x="4" y="8" width="1" height="1" fill="#FFFFFF"/><rect x="5" y="8" width="1" height="1" fill="#FFFFFF"/><rect x="6" y="8" width="1" height="1" fill="#FFFFFF"/><rect x="7" y="8" width="1" height="1" fill="#FFFFFF"/><rect x="8" y="8" width="1" height="1" fill="#FFFFFF"/><rect x="9" y="8" width="1" height="1" fill="#F1EFE2"/><rect x="10" y="8" width="1" height="1" fill="#FFFFFF"/><rect x="1" y="9" width="1" height="1" fill="#ACA899"/><rect x="2" y="9" width="1" height="1" fill="#F1EFE2"/><rect x="3" y="9" width="1" height="1" fill="#F1EFE2"/><rect x="4" y="9" width="1" height="1" fill="#FFFFFF"/><rect x="5" y="9" width="1" height="1" fill="#FFFFFF"/><rect x="6" y="9" width="1" height="1" fill="#FFFFFF"/><rect x="7" y="9" width="1" height="1" fill="#FFFFFF"/><rect x="8" y="9" width="1" height="1" fill="#F1EFE2"/><rect x="9" y="9" width="1" height="1" fill="#F1EFE2"/><rect x="10" y="9" width="1" height="1" fill="#FFFFFF"/><rect x="2" y="10" width="1" height="1" fill="#FFFFFF"/><rect x="3" y="10" width="1" height="1" fill="#FFFFFF"/><rect x="4" y="10" width="1" height="1" fill="#F1EFE2"/><rect x="5" y="10" width="1" height="1" fill="#F1EFE2"/><rect x="6" y="10" width="1" height="1" fill="#F1EFE2"/><rect x="7" y="10" width="1" height="1" fill="#F1EFE2"/><rect x="8" y="10" width="1" height="1" fill="#FFFFFF"/><rect x="9" y="10" width="1" height="1" fill="#FFFFFF"/><rect x="4" y="11" width="1" height="1" fill="#FFFFFF"/><rect x="5" y="11" width="1" height="1" fill="#FFFFFF"/><rect x="6" y="11" width="1" height="1" fill="#FFFFFF"/><rect x="7" y="11" width="1" height="1" fill="#FFFFFF"/><g transform="translate(4,4)"><rect x="1" y="0" width="1" height="1" fill="#000"/><rect x="2" y="0" width="1" height="1" fill="#000"/><rect x="0" y="1" width="1" height="1" fill="#000"/><rect x="1" y="1" width="1" height="1" fill="#000"/><rect x="2" y="1" width="1" height="1" fill="#000"/><rect x="3" y="1" width="1" height="1" fill="#000"/><rect x="0" y="2" width="1" height="1" fill="#000"/><rect x="1" y="2" width="1" height="1" fill="#000"/><rect x="2" y="2" width="1" height="1" fill="#000"/><rect x="3" y="2" width="1" height="1" fill="#000"/><rect x="1" y="3" width="1" height="1" fill="#000"/><rect x="2" y="3" width="1" height="1" fill="#000"/></g></svg>
<span class="t" style="left:405.00px;top:306px;font-size:12px;line-height:12px;letter-spacing:0.378px;color:#000;transform:scaleX(0.9);transform-origin:0 0;">Medium</span>
<svg style="left:386px;top:325px" width="12" height="12" shape-rendering="crispEdges"><rect x="4" y="0" width="1" height="1" fill="#ACA899"/><rect x="5" y="0" width="1" height="1" fill="#ACA899"/><rect x="6" y="0" width="1" height="1" fill="#ACA899"/><rect x="7" y="0" width="1" height="1" fill="#ACA899"/><rect x="2" y="1" width="1" height="1" fill="#ACA899"/><rect x="3" y="1" width="1" height="1" fill="#ACA899"/><rect x="4" y="1" width="1" height="1" fill="#716F64"/><rect x="5" y="1" width="1" height="1" fill="#716F64"/><rect x="6" y="1" width="1" height="1" fill="#716F64"/><rect x="7" y="1" width="1" height="1" fill="#716F64"/><rect x="8" y="1" width="1" height="1" fill="#ACA899"/><rect x="9" y="1" width="1" height="1" fill="#ACA899"/><rect x="1" y="2" width="1" height="1" fill="#ACA899"/><rect x="2" y="2" width="1" height="1" fill="#716F64"/><rect x="3" y="2" width="1" height="1" fill="#716F64"/><rect x="4" y="2" width="1" height="1" fill="#FFFFFF"/><rect x="5" y="2" width="1" height="1" fill="#FFFFFF"/><rect x="6" y="2" width="1" height="1" fill="#FFFFFF"/><rect x="7" y="2" width="1" height="1" fill="#FFFFFF"/><rect x="8" y="2" width="1" height="1" fill="#716F64"/><rect x="9" y="2" width="1" height="1" fill="#F1EFE2"/><rect x="10" y="2" width="1" height="1" fill="#FFFFFF"/><rect x="1" y="3" width="1" height="1" fill="#ACA899"/><rect x="2" y="3" width="1" height="1" fill="#716F64"/><rect x="3" y="3" width="1" height="1" fill="#FFFFFF"/><rect x="4" y="3" width="1" height="1" fill="#FFFFFF"/><rect x="5" y="3" width="1" height="1" fill="#FFFFFF"/><rect x="6" y="3" width="1" height="1" fill="#FFFFFF"/><rect x="7" y="3" width="1" height="1" fill="#FFFFFF"/><rect x="8" y="3" width="1" height="1" fill="#FFFFFF"/><rect x="9" y="3" width="1" height="1" fill="#F1EFE2"/><rect x="10" y="3" width="1" height="1" fill="#FFFFFF"/><rect x="0" y="4" width="1" height="1" fill="#ACA899"/><rect x="1" y="4" width="1" height="1" fill="#716F64"/><rect x="2" y="4" width="1" height="1" fill="#FFFFFF"/><rect x="3" y="4" width="1" height="1" fill="#FFFFFF"/><rect x="4" y="4" width="1" height="1" fill="#FFFFFF"/><rect x="5" y="4" width="1" height="1" fill="#FFFFFF"/><rect x="6" y="4" width="1" height="1" fill="#FFFFFF"/><rect x="7" y="4" width="1" height="1" fill="#FFFFFF"/><rect x="8" y="4" width="1" height="1" fill="#FFFFFF"/><rect x="9" y="4" width="1" height="1" fill="#FFFFFF"/><rect x="10" y="4" width="1" height="1" fill="#F1EFE2"/><rect x="11" y="4" width="1" height="1" fill="#FFFFFF"/><rect x="0" y="5" width="1" height="1" fill="#ACA899"/><rect x="1" y="5" width="1" height="1" fill="#716F64"/><rect x="2" y="5" width="1" height="1" fill="#FFFFFF"/><rect x="3" y="5" width="1" height="1" fill="#FFFFFF"/><rect x="4" y="5" width="1" height="1" fill="#FFFFFF"/><rect x="5" y="5" width="1" height="1" fill="#FFFFFF"/><rect x="6" y="5" width="1" height="1" fill="#FFFFFF"/><rect x="7" y="5" width="1" height="1" fill="#FFFFFF"/><rect x="8" y="5" width="1" height="1" fill="#FFFFFF"/><rect x="9" y="5" width="1" height="1" fill="#FFFFFF"/><rect x="10" y="5" width="1" height="1" fill="#F1EFE2"/><rect x="11" y="5" width="1" height="1" fill="#FFFFFF"/><rect x="0" y="6" width="1" height="1" fill="#ACA899"/><rect x="1" y="6" width="1" height="1" fill="#716F64"/><rect x="2" y="6" width="1" height="1" fill="#FFFFFF"/><rect x="3" y="6" width="1" height="1" fill="#FFFFFF"/><rect x="4" y="6" width="1" height="1" fill="#FFFFFF"/><rect x="5" y="6" width="1" height="1" fill="#FFFFFF"/><rect x="6" y="6" width="1" height="1" fill="#FFFFFF"/><rect x="7" y="6" width="1" height="1" fill="#FFFFFF"/><rect x="8" y="6" width="1" height="1" fill="#FFFFFF"/><rect x="9" y="6" width="1" height="1" fill="#FFFFFF"/><rect x="10" y="6" width="1" height="1" fill="#F1EFE2"/><rect x="11" y="6" width="1" height="1" fill="#FFFFFF"/><rect x="0" y="7" width="1" height="1" fill="#ACA899"/><rect x="1" y="7" width="1" height="1" fill="#716F64"/><rect x="2" y="7" width="1" height="1" fill="#FFFFFF"/><rect x="3" y="7" width="1" height="1" fill="#FFFFFF"/><rect x="4" y="7" width="1" height="1" fill="#FFFFFF"/><rect x="5" y="7" width="1" height="1" fill="#FFFFFF"/><rect x="6" y="7" width="1" height="1" fill="#FFFFFF"/><rect x="7" y="7" width="1" height="1" fill="#FFFFFF"/><rect x="8" y="7" width="1" height="1" fill="#FFFFFF"/><rect x="9" y="7" width="1" height="1" fill="#FFFFFF"/><rect x="10" y="7" width="1" height="1" fill="#F1EFE2"/><rect x="11" y="7" width="1" height="1" fill="#FFFFFF"/><rect x="1" y="8" width="1" height="1" fill="#ACA899"/><rect x="2" y="8" width="1" height="1" fill="#716F64"/><rect x="3" y="8" width="1" height="1" fill="#FFFFFF"/><rect x="4" y="8" width="1" height="1" fill="#FFFFFF"/><rect x="5" y="8" width="1" height="1" fill="#FFFFFF"/><rect x="6" y="8" width="1" height="1" fill="#FFFFFF"/><rect x="7" y="8" width="1" height="1" fill="#FFFFFF"/><rect x="8" y="8" width="1" height="1" fill="#FFFFFF"/><rect x="9" y="8" width="1" height="1" fill="#F1EFE2"/><rect x="10" y="8" width="1" height="1" fill="#FFFFFF"/><rect x="1" y="9" width="1" height="1" fill="#ACA899"/><rect x="2" y="9" width="1" height="1" fill="#F1EFE2"/><rect x="3" y="9" width="1" height="1" fill="#F1EFE2"/><rect x="4" y="9" width="1" height="1" fill="#FFFFFF"/><rect x="5" y="9" width="1" height="1" fill="#FFFFFF"/><rect x="6" y="9" width="1" height="1" fill="#FFFFFF"/><rect x="7" y="9" width="1" height="1" fill="#FFFFFF"/><rect x="8" y="9" width="1" height="1" fill="#F1EFE2"/><rect x="9" y="9" width="1" height="1" fill="#F1EFE2"/><rect x="10" y="9" width="1" height="1" fill="#FFFFFF"/><rect x="2" y="10" width="1" height="1" fill="#FFFFFF"/><rect x="3" y="10" width="1" height="1" fill="#FFFFFF"/><rect x="4" y="10" width="1" height="1" fill="#F1EFE2"/><rect x="5" y="10" width="1" height="1" fill="#F1EFE2"/><rect x="6" y="10" width="1" height="1" fill="#F1EFE2"/><rect x="7" y="10" width="1" height="1" fill="#F1EFE2"/><rect x="8" y="10" width="1" height="1" fill="#FFFFFF"/><rect x="9" y="10" width="1" height="1" fill="#FFFFFF"/><rect x="4" y="11" width="1" height="1" fill="#FFFFFF"/><rect x="5" y="11" width="1" height="1" fill="#FFFFFF"/><rect x="6" y="11" width="1" height="1" fill="#FFFFFF"/><rect x="7" y="11" width="1" height="1" fill="#FFFFFF"/></svg>
<span class="t" style="left:405.00px;top:325px;font-size:12px;line-height:12px;letter-spacing:-0.037px;color:#000;transform:scaleX(0.9);transform-origin:0 0;">Slow</span>
<div class="sunk" style="left:377px;top:353px;width:11px;height:11px;background:#fff"></div>
<span class="t" style="left:396.30px;top:353px;font-size:12px;line-height:12px;letter-spacing:0.611px;color:#000;transform:scaleX(0.9);transform-origin:0 0;">AutoReset</span>
<div class="sunk" style="left:377px;top:372px;width:11px;height:11px;background:#fff"></div>
<span class="t" style="left:397.30px;top:372px;font-size:12px;line-height:12px;letter-spacing:0.356px;color:#000;transform:scaleX(0.9);transform-origin:0 0;">Transitions</span>
<div class="sunk" style="left:377px;top:391px;width:11px;height:11px;background:#fff"></div>
<span class="t" style="left:396.70px;top:391px;font-size:12px;line-height:12px;letter-spacing:0.148px;color:#000;transform:scaleX(0.9);transform-origin:0 0;">Life</span>
<div class="sunk" style="left:377px;top:410px;width:50px;height:18px;background:#fff"></div>
<div class="btn" style="left:411px;top:412px;width:15px;height:15px;"></div>
<svg style="left:416px;top:419px" width="7" height="4" shape-rendering="crispEdges" fill="#000"><rect x="0" y="0" width="7" height="1"/><rect x="1" y="1" width="5" height="1"/><rect x="2" y="2" width="3" height="1"/><rect x="3" y="3" width="1" height="1"/></svg>
<span class="t" style="left:381.70px;top:415px;font-size:12px;line-height:12px;letter-spacing:0.000px;color:#000;transform:scaleX(0.9);transform-origin:0 0;">0</span>
<span class="t" style="left:435.60px;top:415px;font-size:12px;line-height:12px;letter-spacing:0.296px;color:#000;transform:scaleX(0.9);transform-origin:0 0;">Diff</span>
<span class="t" style="left:487.40px;top:267px;font-size:12px;line-height:12px;letter-spacing:1.175px;color:#000;transform:scaleX(0.9);transform-origin:0 0;">284,2518</span>
<div class="sunk" style="left:487px;top:308px;width:11px;height:11px;background:#fff"></div>
<span class="t" style="left:506.70px;top:308px;font-size:12px;line-height:12px;letter-spacing:0.481px;color:#000;transform:scaleX(0.9);transform-origin:0 0;">Output Dem</span>
<div style="left:486px;top:331px;width:183px;height:1px;background:#ACA899"></div>
<div style="left:486px;top:331px;width:1px;height:17px;background:#ACA899"></div>
<div style="left:486px;top:347px;width:183px;height:1px;background:#FFFFFF"></div>
<div style="left:668px;top:331px;width:1px;height:17px;background:#FFFFFF"></div>
<div style="left:487px;top:332px;width:181px;height:15px;background:repeating-conic-gradient(#fff 0 25%, #ECE9D8 0 50%) 0 0/2px 2px"></div>
<div class="btn" style="left:487px;top:332px;width:15px;height:13px;"></div>
<svg style="left:493px;top:337px" width="3" height="5" shape-rendering="crispEdges" fill="#000"><rect x="0" y="2" width="1" height="1"/><rect x="1" y="1" width="1" height="3"/><rect x="2" y="0" width="1" height="5"/></svg>
<div class="btn" style="left:651px;top:332px;width:15px;height:13px;"></div>
<svg style="left:659px;top:337px" width="3" height="5" shape-rendering="crispEdges" fill="#000"><rect x="0" y="0" width="1" height="5"/><rect x="1" y="1" width="1" height="3"/><rect x="2" y="2" width="1" height="1"/></svg>
<div class="btn" style="left:569px;top:332px;width:15px;height:13px;"></div>
<span class="t" style="left:676.50px;top:333px;font-size:12px;line-height:12px;letter-spacing:0.296px;color:#000;transform:scaleX(0.9);transform-origin:0 0;">Trimming 0</span>
<div style="left:486px;top:353px;width:183px;height:1px;background:#ACA899"></div>
<div style="left:486px;top:353px;width:1px;height:17px;background:#ACA899"></div>
<div style="left:486px;top:369px;width:183px;height:1px;background:#FFFFFF"></div>
<div style="left:668px;top:353px;width:1px;height:17px;background:#FFFFFF"></div>
<div style="left:487px;top:354px;width:181px;height:15px;background:repeating-conic-gradient(#fff 0 25%, #ECE9D8 0 50%) 0 0/2px 2px"></div>
<div class="btn" style="left:487px;top:354px;width:15px;height:13px;"></div>
<svg style="left:493px;top:359px" width="3" height="5" shape-rendering="crispEdges" fill="#000"><rect x="0" y="2" width="1" height="1"/><rect x="1" y="1" width="1" height="3"/><rect x="2" y="0" width="1" height="5"/></svg>
<div class="btn" style="left:651px;top:354px;width:15px;height:13px;"></div>
<svg style="left:659px;top:359px" width="3" height="5" shape-rendering="crispEdges" fill="#000"><rect x="0" y="0" width="1" height="5"/><rect x="1" y="1" width="1" height="3"/><rect x="2" y="2" width="1" height="1"/></svg>
<div class="btn" style="left:527px;top:354px;width:15px;height:13px;"></div>
<span class="t" style="left:677.90px;top:355px;font-size:12px;line-height:12px;letter-spacing:0.000px;color:#000;transform:scaleX(0.9);transform-origin:0 0;">Delay</span>
<span class="t" style="left:717.40px;top:355px;font-size:12px;line-height:12px;letter-spacing:1.361px;color:#000;transform:scaleX(0.9);transform-origin:0 0;">0,018</span>
<div style="left:486px;top:375px;width:183px;height:1px;background:#ACA899"></div>
<div style="left:486px;top:375px;width:1px;height:17px;background:#ACA899"></div>
<div style="left:486px;top:391px;width:183px;height:1px;background:#FFFFFF"></div>
<div style="left:668px;top:375px;width:1px;height:17px;background:#FFFFFF"></div>
<div style="left:487px;top:376px;width:181px;height:15px;background:repeating-conic-gradient(#fff 0 25%, #ECE9D8 0 50%) 0 0/2px 2px"></div>
<div class="btn" style="left:487px;top:376px;width:15px;height:13px;"></div>
<svg style="left:493px;top:381px" width="3" height="5" shape-rendering="crispEdges" fill="#000"><rect x="0" y="2" width="1" height="1"/><rect x="1" y="1" width="1" height="3"/><rect x="2" y="0" width="1" height="5"/></svg>
<div class="btn" style="left:651px;top:376px;width:15px;height:13px;"></div>
<svg style="left:659px;top:381px" width="3" height="5" shape-rendering="crispEdges" fill="#000"><rect x="0" y="0" width="1" height="5"/><rect x="1" y="1" width="1" height="3"/><rect x="2" y="2" width="1" height="1"/></svg>
<div class="btn" style="left:634px;top:376px;width:15px;height:13px;"></div>
<span class="t" style="left:677.10px;top:377px;font-size:12px;line-height:12px;letter-spacing:0.513px;color:#000;transform:scaleX(0.9);transform-origin:0 0;">Time of life 1</span>
<div style="left:486px;top:397px;width:183px;height:1px;background:#ACA899"></div>
<div style="left:486px;top:397px;width:1px;height:17px;background:#ACA899"></div>
<div style="left:486px;top:413px;width:183px;height:1px;background:#FFFFFF"></div>
<div style="left:668px;top:397px;width:1px;height:17px;background:#FFFFFF"></div>
<div style="left:487px;top:398px;width:181px;height:15px;background:repeating-conic-gradient(#fff 0 25%, #ECE9D8 0 50%) 0 0/2px 2px"></div>
<div class="btn" style="left:487px;top:398px;width:15px;height:13px;"></div>
<svg style="left:493px;top:403px" width="3" height="5" shape-rendering="crispEdges" fill="#000"><rect x="0" y="2" width="1" height="1"/><rect x="1" y="1" width="1" height="3"/><rect x="2" y="0" width="1" height="5"/></svg>
<div class="btn" style="left:651px;top:398px;width:15px;height:13px;"></div>
<svg style="left:659px;top:403px" width="3" height="5" shape-rendering="crispEdges" fill="#000"><rect x="0" y="0" width="1" height="5"/><rect x="1" y="1" width="1" height="3"/><rect x="2" y="2" width="1" height="1"/></svg>
<div class="btn" style="left:581px;top:398px;width:15px;height:13px;"></div>
<span class="t" style="left:676.50px;top:400px;font-size:12px;line-height:12px;letter-spacing:0.465px;color:#000;transform:scaleX(0.9);transform-origin:0 0;">Contrast 151</span>
<div style="left:487px;top:420px;width:181px;height:1px;background:#ACA899"></div>
<div style="left:487px;top:420px;width:1px;height:15px;background:#ACA899"></div>
<div style="left:487px;top:434px;width:181px;height:1px;background:#FFFFFF"></div>
<div style="left:667px;top:420px;width:1px;height:15px;background:#FFFFFF"></div>
<div class="btn" style="left:870px;top:324px;width:59px;height:19px;"></div>
<span class="t" style="left:886.50px;top:328px;font-size:12px;line-height:12px;letter-spacing:0.750px;color:#000;transform:scaleX(0.9);transform-origin:0 0;">Start</span>
<div class="btn" style="left:870px;top:356px;width:59px;height:19px;"></div>
<span class="t" style="left:885.80px;top:360px;font-size:12px;line-height:12px;letter-spacing:0.333px;color:#000;transform:scaleX(0.9);transform-origin:0 0;">Clear</span>
<div class="btn" style="left:870px;top:418px;width:59px;height:19px;"></div>
<span class="t" style="left:876.60px;top:422px;font-size:12px;line-height:12px;letter-spacing:0.397px;color:#000;transform:scaleX(0.9);transform-origin:0 0;">LoadFile</span>
<div style="left:6px;top:447px;width:99px;height:1px;background:#ACA899"></div>
<div style="left:6px;top:447px;width:1px;height:18px;background:#ACA899"></div>
<div style="left:104px;top:447px;width:1px;height:18px;background:#FFFFFF"></div>
<div style="left:107px;top:447px;width:98px;height:1px;background:#ACA899"></div>
<div style="left:107px;top:447px;width:1px;height:18px;background:#ACA899"></div>
<div style="left:204px;top:447px;width:1px;height:18px;background:#FFFFFF"></div>
<div style="left:207px;top:447px;width:98px;height:1px;background:#ACA899"></div>
<div style="left:207px;top:447px;width:1px;height:18px;background:#ACA899"></div>
<div style="left:304px;top:447px;width:1px;height:18px;background:#FFFFFF"></div>
<div style="left:307px;top:447px;width:632px;height:1px;background:#ACA899"></div>
<div style="left:307px;top:447px;width:1px;height:18px;background:#ACA899"></div>
<div style="left:938px;top:447px;width:1px;height:18px;background:#FFFFFF"></div>
<span class="t" style="left:11.70px;top:451px;font-size:12px;line-height:12px;letter-spacing:1.011px;color:#000;transform:scaleX(0.9);transform-origin:0 0;">F = 1943,25</span>
<span class="t" style="left:113.90px;top:451px;font-size:12px;line-height:12px;letter-spacing:0.848px;color:#000;transform:scaleX(0.9);transform-origin:0 0;">Fu = 1625,61</span>
<span class="t" style="left:213.70px;top:451px;font-size:12px;line-height:12px;letter-spacing:0.911px;color:#000;transform:scaleX(0.9);transform-origin:0 0;">dF = 0</span>
<span class="t" style="left:309.80px;top:451px;font-size:12px;line-height:12px;letter-spacing:0.812px;color:#000;transform:scaleX(0.9);transform-origin:0 0;">C:\Dokumente und Einstellungen\LDO.LDO-DELL\Desktop\28x_64Bd-2(0)(f1).wav</span>
</body></html>
